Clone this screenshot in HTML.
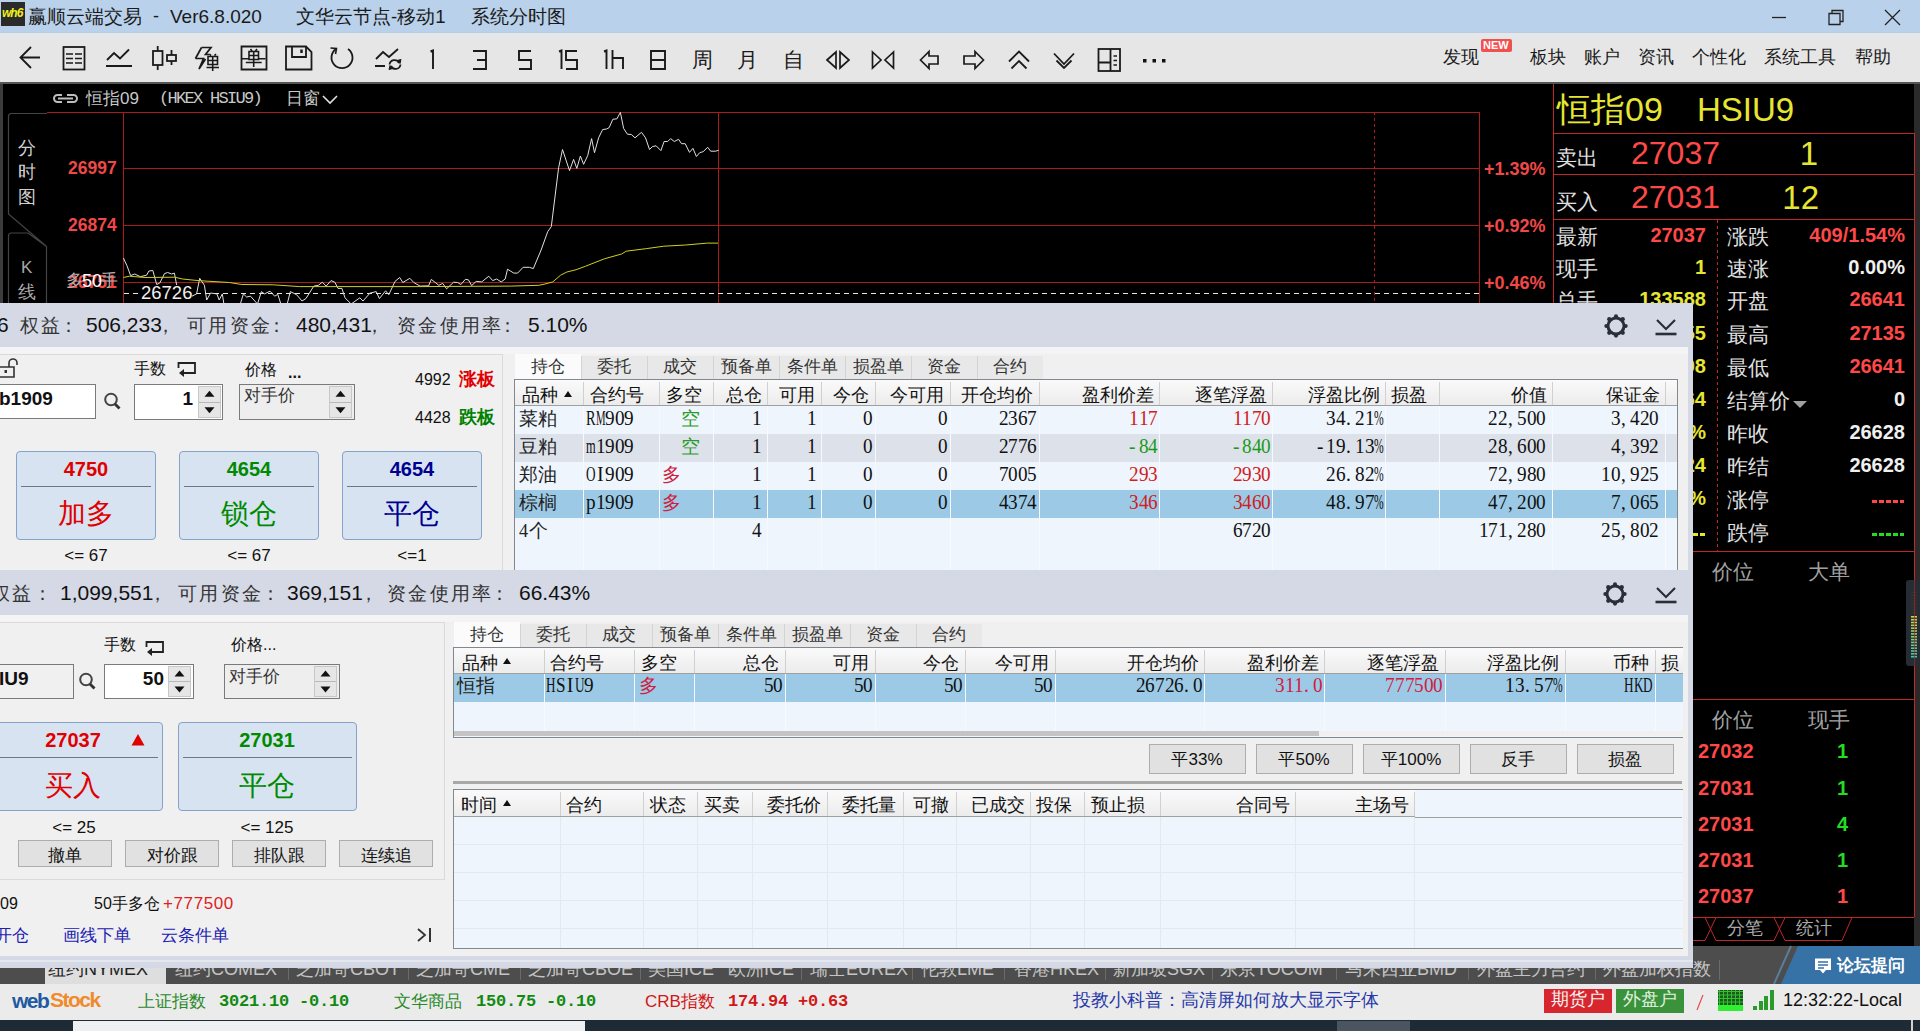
<!DOCTYPE html>
<html><head><meta charset="utf-8">
<style>
*{margin:0;padding:0;box-sizing:border-box}
html,body{width:1920px;height:1031px;overflow:hidden;background:#f0f0f0;font-family:"Liberation Sans",sans-serif;color:#000}
.a{position:absolute}
.t{position:absolute;white-space:nowrap;line-height:1}
svg{position:absolute;overflow:visible}
.sr{font-family:"Liberation Serif",serif}
.mo{font-family:"Liberation Mono",monospace}
.b{font-weight:bold}
.r{text-align:right}
.c{text-align:center}
/* quote panel */
.ql{color:#e0e0e0;font-size:19px}
.qv{font-weight:bold;font-size:20px;text-align:right}
.red{color:#ff4848}
.yel{color:#e6e632}
.wht{color:#f0f0f0}
.grn{color:#22dd22}
/* tables */
.tab{position:absolute;height:24px;background:#e8e8e8;border-right:1px solid #d0d0d0;font-size:17px;color:#333;text-align:center;line-height:24px}
.tab.on{background:#fcfcfc}
.th{position:absolute;font-size:17px;color:#111;line-height:1;white-space:nowrap}
.td{position:absolute;font-size:18px;line-height:1;white-space:nowrap;font-family:"Liberation Serif",serif;color:#111}
.btn{position:absolute;background:#e1e1e1;border:1px solid #adadad;font-size:16px;color:#111;text-align:center}
.bb{position:absolute;background:#d7e3f1;border:1px solid #85a2c8;border-radius:4px}

</style></head><body>
<!-- title bar -->
<div class="a" style="left:0;top:0;width:1920px;height:33px;background:#b9d1ea"></div>
<div class="a" style="left:1px;top:2px;width:24px;height:24px;background:#2a2a2a"></div>
<div class="t b" style="left:2px;top:7px;font-size:12px;color:#f0f020;letter-spacing:-1px;font-style:italic">wh6</div>
<div class="t" style="left:28px;top:8px;font-size:18.5px;color:#1a1a1a">赢顺云端交易</div>
<div class="t" style="left:153px;top:7px;font-size:18px;color:#1a1a1a">-</div>
<div class="t" style="left:170px;top:7px;font-size:19px;color:#1a1a1a">Ver6.8.020</div>
<div class="t" style="left:296px;top:8px;font-size:18.5px;color:#1a1a1a">文华云节点-移动1</div>
<div class="t" style="left:471px;top:8px;font-size:18.5px;color:#1a1a1a">系统分时图</div>
<svg style="left:0;top:0" width="1920" height="33" fill="none" stroke="#222" stroke-width="1.3">
<path d="M1772 17.5H1786"/>
<path d="M1829 13.5h11v11h-11z M1832 13.5v-3h11v11h-3"/>
<path d="M1885 10L1900 25M1900 10L1885 25"/>
</svg>
<!-- toolbar -->
<div class="a" style="left:0;top:33px;width:1920px;height:49px;background:#e6e6e6"></div>
<div class="a" style="left:0;top:32px;width:1920px;height:1px;background:#bfcbd8"></div><div class="a" style="left:0;top:33px;width:1920px;height:6px;background:linear-gradient(#e3e8ee,#e6e6e6)"></div>
<div class="a" style="left:0;top:82px;width:1920px;height:2px;background:#555"></div>
<svg style="left:0;top:0" width="1920" height="84" fill="none" stroke="#1a1a1a" stroke-width="1.8">
<!-- back -->
<path d="M40 57.5H21M31 47L20.5 57.5L31 68"/>
<!-- list -->
<rect x="63.5" y="47" width="21" height="22.5"/>
<path d="M66 54h7M75 54h7M66 58.5h7M75 58.5h7M66 63h7M75 63h7" stroke-width="1.5"/>
<!-- line chart -->
<path d="M107 60L114 53L120 58.5L129 49.5M106 66H132"/>
<!-- candles -->
<rect x="153" y="51" width="9.5" height="14"/>
<path d="M157.7 46V51M157.7 65V70"/>
<rect x="167" y="55" width="9" height="6"/>
<path d="M171.5 50V55M171.5 61V65"/>
<!-- lightning + dan -->
<path d="M201.5 47.5H211L205.5 54.5H209.5M195.5 58.5H203.5L199 69L205.5 59" stroke-width="1.7" stroke-linejoin="miter"/><path d="M201.5 47.5L195.5 58.5" stroke-width="1.7"/><path d="M208 56.5H217.5V64.5H208ZM208 60.5H217.5M212.7 56.5V71M206.5 67.5H219M209.5 54L211 55.5M216 54L214.5 55.5" stroke-width="1.6"/>
<!-- dan box -->
<path d="M241.5 46.5H266.5V69.5H241.5Z"/>
<path d="M249 51.5H258.5V59.5H249ZM249 55.5H258.5M253.7 51.5V67M245.8 62.5H261.7M242 58.7H249M258.5 58.7H265.5M250.5 49L252 51M257 49L255.5 51" stroke-width="1.6"/>
<!-- save -->
<path d="M286 46.5H306L311.5 52V69.5H286Z"/>
<path d="M292 46.5V57H306V46.5"/>
<path d="M301.5 49.5V53" stroke-width="2.5"/>
<!-- refresh -->
<path d="M336 49A10.5 10.5 0 1 0 348 49"/>
<path d="M330.5 48L336.5 48.5L335.5 54" stroke-width="1.6"/>
<!-- line sync -->
<path d="M376 59L383 52L389 57L398 49M375 66H385"/>
<path d="M389.5 64.5a5 5 0 0 1 9.5-1.5M400.5 64.5a5 5 0 0 1 -9.5 1.5" stroke-width="1.8"/><path d="M397 60.5L400 63.5L401 59.5ZM393 68.5L390 65.5L389 69.5Z" fill="#1a1a1a" stroke-width="1"/>
<!-- 1 3 5 15 1h -->
<path d="M430.5 51.5L433 50.5V69M473 51H486V69H473M477 60H486M531 51H519V60H531V69H519M559 51.5L561.5 50.5V69M577 51H566V60H577V69H566M604 51.5L606.5 50.5V69M612.5 50V69M612.5 58H623V69" stroke-width="1.9"/>
<!-- 日 -->
<path d="M651 51H665V69H651ZM651 60H665" stroke-width="1.9"/>
<!-- triangles -->
<path d="M827 60L836 52V68ZM840 52L849 60L840 68Z" stroke-width="1.7"/>
<path d="M872.5 52L881 60L872.5 68ZM893.5 52L885 60L893.5 68Z" stroke-width="1.7"/>
<!-- block arrows -->
<path d="M920.5 60L929 51.5V56H938V64H929V68.5Z" stroke-width="1.7"/>
<path d="M983.5 60L975 51.5V56H964V64H975V68.5Z" stroke-width="1.7"/>
<!-- chevrons -->
<path d="M1009 61.5L1019 51.5L1029 61.5M1011.5 68.5L1019 61L1026.5 68.5"/>
<path d="M1054 51.5L1064 62L1074 51.5M1056.5 58.5L1064 66L1071.5 58.5" transform="translate(0,2)"/>
<!-- layout -->
<rect x="1098.5" y="49" width="21.5" height="22"/>
<path d="M1110.5 49V71M1098.5 62.5H1110.5"/>
<path d="M1113.5 56H1117M1113.5 60.5H1117M1113.5 65H1117" stroke-width="1.7"/>
</svg>
<svg style="left:0;top:0" width="1920" height="84">
<rect x="1143" y="59" width="3.5" height="3.5" fill="#111"/>
<rect x="1152.5" y="59" width="3.5" height="3.5" fill="#111"/>
<rect x="1162" y="59" width="3.5" height="3.5" fill="#111"/>
</svg>
<div class="t" style="left:692px;top:49px;font-size:21px;color:#1a1a1a">周</div>
<div class="t" style="left:737px;top:49px;font-size:21px;color:#1a1a1a">月</div>
<div class="t" style="left:783px;top:49px;font-size:21px;color:#1a1a1a">自</div>
<!-- right menu -->
<div class="t" style="left:1443px;top:48px;font-size:18px;color:#1a1a1a">发现</div>
<div class="a" style="left:1481px;top:39px;width:31px;height:13px;background:#f05050;border-radius:2px"></div>
<div class="t b" style="left:1483px;top:40px;font-size:11px;color:#fff">NEW</div>
<div class="t" style="left:1530px;top:48px;font-size:18px;color:#1a1a1a">板块</div>
<div class="t" style="left:1584px;top:48px;font-size:18px;color:#1a1a1a">账户</div>
<div class="t" style="left:1638px;top:48px;font-size:18px;color:#1a1a1a">资讯</div>
<div class="t" style="left:1692px;top:48px;font-size:18px;color:#1a1a1a">个性化</div>
<div class="t" style="left:1764px;top:48px;font-size:18px;color:#1a1a1a">系统工具</div>
<div class="t" style="left:1855px;top:48px;font-size:18px;color:#1a1a1a">帮助</div>
<!-- chart -->
<div class="a" style="left:0;top:84px;width:1553px;height:219px;background:#000"></div>
<div class="a" style="left:0;top:84px;width:3px;height:219px;background:#3c3c3c"></div>
<svg style="left:0;top:0" width="1553" height="303">
<defs><clipPath id="cc"><rect x="0" y="84" width="1553" height="219"/></clipPath></defs>
<g clip-path="url(#cc)">
<path d="M8.5 303V236Q8.5 233 11.5 233H28L46.5 246.5V303M47 113.5H11.5Q8.5 113.5 8.5 116.5V214L46 246" fill="none" stroke="#444" stroke-width="1.2"/>
<path d="M47 112.5 H1479" stroke="#a81c1c" stroke-width="1"/>
<path d="M123 168.5 H1479" stroke="#a81c1c" stroke-width="1"/>
<path d="M123 225.5 H1479" stroke="#a81c1c" stroke-width="1"/>
<path d="M123 282.5 H1479" stroke="#a81c1c" stroke-width="1"/>
<path d="M123.5 112V303 M718.5 112V303 M1479.5 112V303" stroke="#a81c1c" stroke-width="1"/>
<path d="M1374.5 112V303" stroke="#a81c1c" stroke-width="1" stroke-dasharray="3,3"/>
<path d="M1553.5 84V303" stroke="#a81c1c" stroke-width="1"/>
<path d="M124 293.5H1479" stroke="#e8e8e8" stroke-width="1.2" stroke-dasharray="5,4"/>
<polyline points="123.4,258.0 127.0,265.8 130.6,275.6 134.8,274.0 140.3,276.7 146.6,275.2 148.9,271.0 152.8,270.5 156.7,284.5 159.8,283.0 164.5,273.6 167.7,272.5 171.6,274.0 174.4,273.1 177.0,286.9 184.0,295.0 190.3,297.0 196.6,293.9 199.7,278.3 204.4,285.3 206.7,300.0 210.6,293.0 216.9,293.9 219.2,300.0 222.3,293.9 223.9,304.0 240.3,304.0 243.4,293.9 246.6,297.0 250.5,296.2 257.5,304.0 261.4,291.6 264.5,293.9 270.0,291.2 274.7,296.2 277.8,294.4 280.9,304.0 287.2,304.0 290.3,291.6 296.6,294.7 302.0,301.0 305.9,298.6 313.8,286.1 318.4,285.3 322.3,282.2 326.2,286.1 331.0,280.6 334.8,282.2 338.0,288.4 341.9,288.4 345.0,297.8 351.2,304.0 359.8,297.8 363.0,301.0 370.0,293.1 376.2,291.6 379.4,298.6 385.6,290.8 388.8,294.7 395.0,281.4 399.7,277.5 402.8,282.5 409.8,278.3 413.8,282.5 420.0,286.1 428.6,285.8 431.3,279.4 438.8,285.3 442.7,283.4 446.6,288.8 453.6,282.2 457.5,282.5 460.9,284.5 465.3,279.4 468.4,279.8 471.6,285.6 476.2,281.4 481.7,281.9 488.8,276.2 492.7,280.6 496.6,279.0 501.2,281.9 505.2,279.0 507.5,269.2 513.8,273.1 517.6,273.1 523.1,267.3 529.4,267.3 533.3,268.6 541.1,250.0 547.7,231.7 551.3,226.6 558.6,167.7 562.5,149.5 569.5,170.6 573.6,159.4 576.8,168.4 580.4,156.0 583.6,164.3 587.7,155.6 591.6,138.6 594.5,152.7 598.6,137.8 602.7,129.5 606.2,129.1 609.1,127.7 612.9,119.2 616.8,118.9 620.4,112.4 623.6,128.4 627.4,134.2 631.3,134.5 635.0,137.8 641.5,132.3 645.5,137.8 649.5,149.5 652.4,146.6 656.1,145.8 660.9,150.6 664.1,141.5 667.7,141.5 670.6,138.6 674.3,141.5 678.6,139.3 681.5,143.7 685.2,143.7 689.5,152.4 692.9,148.3 696.4,156.5 699.7,152.7 703.1,151.7 707.7,147.3 710.7,151.2 715.7,151.2 718.7,150.2" fill="none" stroke="#e0e0e0" stroke-width="1"/>
<polyline points="123.4,277.5 129.4,276.2 145.0,277.5 174.7,277.2 182.5,279.0 198.0,280.6 229.4,282.5 241.9,284.5 273.1,284.8 299.7,286.6 420.0,286.6 510.6,286.1 538.8,285.3 545.0,284.0 552.8,281.9 560.6,275.2 566.9,272.0 576.2,269.7 585.6,266.2 604.4,258.8 621.6,254.0 626.2,251.2 646.6,248.6 663.8,246.2 685.6,245.0 707.5,243.1 718.0,243.1" fill="none" stroke="#d0d020" stroke-width="1"/>
<path d="M62 95H57.5a3.5 3.5 0 0 0 0 7H62M67 95H73.5a3.5 3.5 0 0 1 0 7H67M58 98.5H73" fill="none" stroke="#bdbdbd" stroke-width="2"/>
<path d="M323 96L330 103L337 96" fill="none" stroke="#e0e0e0" stroke-width="1.6"/>
</g></svg>
<div class="t" style="left:86px;top:90px;font-size:17px;color:#c8c8c8">恒指09</div>
<div class="t mo" style="left:159px;top:90px;font-size:17px;color:#c8c8c8;letter-spacing:-1.7px">(HKEX HSIU9)</div>
<div class="t" style="left:286px;top:90px;font-size:17px;color:#c8c8c8">日窗</div>
<div class="t" style="left:18px;top:139px;font-size:18px;color:#d0d0d0">分</div>
<div class="t" style="left:18px;top:163px;font-size:18px;color:#d0d0d0">时</div>
<div class="t" style="left:18px;top:188px;font-size:18px;color:#d0d0d0">图</div>
<div class="t" style="left:21px;top:259px;font-size:17px;color:#a8a8a8">K</div>
<div class="t" style="left:18px;top:283px;font-size:18px;color:#a8a8a8">线</div>
<div class="t b" style="left:68px;top:160px;font-size:17.5px;color:#f04848">26997</div>
<div class="t b" style="left:68px;top:217px;font-size:17.5px;color:#f04848">26874</div>
<div class="t b" style="left:68px;top:274px;font-size:17.5px;color:#f04848">26751</div>
<div class="t b" style="left:1484px;top:160px;font-size:18px;color:#f04848">+1.39%</div>
<div class="t b" style="left:1484px;top:217px;font-size:18px;color:#f04848">+0.92%</div>
<div class="t b" style="left:1484px;top:274px;font-size:18px;color:#f04848">+0.46%</div>
<div class="t" style="left:66px;top:272px;font-size:17px;color:#b0b0b0">多</div>
<div class="t" style="left:101px;top:272px;font-size:17px;color:#b0b0b0">手</div>
<div class="t" style="left:82px;top:272px;font-size:18px;color:#fff">50</div>
<div class="a" style="left:140px;top:285px;width:52px;height:18px;background:#000"></div>
<div class="t" style="left:141px;top:284px;font-size:18.5px;color:#f0f0f0">26726</div>
<!-- quote panel -->
<div class="a" style="left:1553px;top:84px;width:367px;height:862px;background:#000"></div>
<div class="a" style="left:1914px;top:84px;width:6px;height:862px;background:#2a2a2a"></div>
<svg style="left:0;top:0" width="1920" height="1031">
<path d="M1553.5 84V946" stroke="#c02828" stroke-width="1"/>
<path d="M1553 133.5H1914" stroke="#c02828" stroke-width="1"/>
<path d="M1553 174.5H1914" stroke="#c02828" stroke-width="1"/>
<path d="M1553 219.5H1914" stroke="#c02828" stroke-width="1"/>
<path d="M1553 551.5H1914" stroke="#c02828" stroke-width="1"/>
<path d="M1553 699.5H1914" stroke="#c02828" stroke-width="1"/>
<path d="M1553 917.5H1914" stroke="#c02828" stroke-width="1"/>
<path d="M1914.5 133V917" stroke="#c02828" stroke-width="1"/>
<path d="M1717.5 220V551" stroke="#c02828" stroke-width="1" stroke-dasharray="3,3"/>
<path d="M1553 940.5H1705L1716 917.5M1705 917.5L1716 940.5H1774L1785 917.5M1774 917.5L1785 940.5H1842L1852 917.5" fill="none" stroke="#c02828" stroke-width="1"/>
<path d="M1793 401H1807L1800 408Z" fill="#a0a0a0"/>
<rect x="1906" y="580" width="14" height="86" rx="3" fill="#262c34"/>
<rect x="1911" y="616.0" width="6" height="1.6" fill="#d8d040"/>
<rect x="1911" y="618.9" width="6" height="1.6" fill="#cdcf47"/>
<rect x="1911" y="621.7" width="6" height="1.6" fill="#c2ce4e"/>
<rect x="1911" y="624.5" width="6" height="1.6" fill="#b7ce56"/>
<rect x="1911" y="627.4" width="6" height="1.6" fill="#accd5d"/>
<rect x="1911" y="630.2" width="6" height="1.6" fill="#a1cd65"/>
<rect x="1911" y="633.1" width="6" height="1.6" fill="#96cc6c"/>
<rect x="1911" y="636.0" width="6" height="1.6" fill="#8ccc74"/>
<rect x="1911" y="638.8" width="6" height="1.6" fill="#81cb7b"/>
<rect x="1911" y="641.6" width="6" height="1.6" fill="#76ca82"/>
<rect x="1911" y="644.5" width="6" height="1.6" fill="#6bca8a"/>
<rect x="1911" y="647.4" width="6" height="1.6" fill="#60c991"/>
<rect x="1911" y="650.2" width="6" height="1.6" fill="#55c999"/>
<rect x="1911" y="653.0" width="6" height="1.6" fill="#4ac8a0"/>
<rect x="1911" y="655.9" width="6" height="1.6" fill="#40c8a8"/>
<rect x="1911" y="592.0" width="6" height="1.2" fill="#3a3030"/>
<rect x="1911" y="594.9" width="6" height="1.2" fill="#3a3030"/>
<rect x="1911" y="597.7" width="6" height="1.2" fill="#3a3030"/>
<rect x="1911" y="600.5" width="6" height="1.2" fill="#3a3030"/>
<rect x="1911" y="603.4" width="6" height="1.2" fill="#3a3030"/>
<rect x="1911" y="606.2" width="6" height="1.2" fill="#3a3030"/>
<rect x="1911" y="609.1" width="6" height="1.2" fill="#3a3030"/>
<rect x="1911" y="612.0" width="6" height="1.2" fill="#3a3030"/>
<path d="M1914.5 580V666" stroke="#a02828" stroke-width="1" opacity="0.7"/>
</svg>
<div class="t" style="left:1557px;top:92px;font-size:34px;color:#e6e632;">恒指09</div>
<div class="t" style="left:1697px;top:93px;font-size:33px;color:#e6e632;">HSIU9</div>
<div class="t" style="left:1556px;top:147px;font-size:21px;color:#e0e0e0;">卖出</div>
<div class="t" style="left:1631px;top:137px;font-size:32px;color:#ff4848;">27037</div>
<div class="t" style="right:102px;top:137px;font-size:33px;color:#e6e632;">1</div>
<div class="t" style="left:1556px;top:191px;font-size:21px;color:#e0e0e0;">买入</div>
<div class="t" style="left:1631px;top:181px;font-size:32px;color:#ff4848;">27031</div>
<div class="t" style="right:101px;top:181px;font-size:33px;color:#e6e632;">12</div>
<div class="t" style="left:1556px;top:226px;font-size:21px;color:#e0e0e0;">最新</div>
<div class="t b" style="right:214px;top:225px;font-size:20px;color:#ff4848;">27037</div>
<div class="t" style="left:1727px;top:226px;font-size:21px;color:#e0e0e0;">涨跌</div>
<div class="t b" style="right:15px;top:225px;font-size:20px;color:#ff4848;">409/1.54%</div>
<div class="t" style="left:1556px;top:258px;font-size:21px;color:#e0e0e0;">现手</div>
<div class="t b" style="right:214px;top:257px;font-size:20px;color:#e6e632;">1</div>
<div class="t" style="left:1727px;top:258px;font-size:21px;color:#e0e0e0;">速涨</div>
<div class="t b" style="right:15px;top:257px;font-size:20px;color:#f0f0f0;">0.00%</div>
<div class="t" style="left:1556px;top:290px;font-size:21px;color:#e0e0e0;">总手</div>
<div class="t b" style="right:214px;top:289px;font-size:20px;color:#e6e632;">133588</div>
<div class="t" style="left:1727px;top:290px;font-size:21px;color:#e0e0e0;">开盘</div>
<div class="t b" style="right:15px;top:289px;font-size:20px;color:#ff4848;">26641</div>
<div class="t" style="left:1727px;top:324px;font-size:21px;color:#e0e0e0;">最高</div>
<div class="t b" style="right:15px;top:323px;font-size:20px;color:#ff4848;">27135</div>
<div class="t" style="left:1727px;top:357px;font-size:21px;color:#e0e0e0;">最低</div>
<div class="t b" style="right:15px;top:356px;font-size:20px;color:#ff4848;">26641</div>
<div class="t" style="left:1727px;top:390px;font-size:21px;color:#e0e0e0;">结算价</div>
<div class="t b" style="right:15px;top:389px;font-size:20px;color:#f0f0f0;">0</div>
<div class="t" style="left:1727px;top:423px;font-size:21px;color:#e0e0e0;">昨收</div>
<div class="t b" style="right:15px;top:422px;font-size:20px;color:#f0f0f0;">26628</div>
<div class="t" style="left:1727px;top:456px;font-size:21px;color:#e0e0e0;">昨结</div>
<div class="t b" style="right:15px;top:455px;font-size:20px;color:#f0f0f0;">26628</div>
<div class="t" style="left:1727px;top:489px;font-size:21px;color:#e0e0e0;">涨停</div>
<div class="t" style="left:1727px;top:522px;font-size:21px;color:#e0e0e0;">跌停</div>
<div class="t b" style="right:214px;top:323px;font-size:20px;color:#e6e632;">55</div>
<div class="t b" style="right:214px;top:356px;font-size:20px;color:#e6e632;">98</div>
<div class="t b" style="right:214px;top:389px;font-size:20px;color:#e6e632;">64</div>
<div class="t b" style="right:214px;top:422px;font-size:20px;color:#e6e632;">%</div>
<div class="t b" style="right:214px;top:455px;font-size:20px;color:#e6e632;">24</div>
<div class="t b" style="right:214px;top:488px;font-size:20px;color:#e6e632;">%</div>
<div class="a" style="left:1872px;top:500px;width:32px;height:3px;background:repeating-linear-gradient(90deg,#ff4848 0 5px,transparent 5px 7px)"></div>
<div class="a" style="left:1872px;top:533px;width:32px;height:3px;background:repeating-linear-gradient(90deg,#22dd22 0 5px,transparent 5px 7px)"></div>
<div class="a" style="left:1693px;top:533px;width:13px;height:3px;background:repeating-linear-gradient(90deg,#e6e632 0 5px,transparent 5px 7px)"></div>
<div class="t" style="left:1712px;top:561px;font-size:21px;color:#a0a0a0;">价位</div>
<div class="t" style="left:1808px;top:561px;font-size:21px;color:#a0a0a0;">大单</div>
<div class="t" style="left:1712px;top:709px;font-size:21px;color:#a0a0a0;">价位</div>
<div class="t" style="left:1808px;top:709px;font-size:21px;color:#a0a0a0;">现手</div>
<div class="t b" style="left:1698px;top:741px;font-size:20px;color:#ff4848;">27032</div>
<div class="t b" style="right:72px;top:741px;font-size:20px;color:#22dd22;">1</div>
<div class="t b" style="left:1698px;top:778px;font-size:20px;color:#ff4848;">27031</div>
<div class="t b" style="right:72px;top:778px;font-size:20px;color:#22dd22;">1</div>
<div class="t b" style="left:1698px;top:814px;font-size:20px;color:#ff4848;">27031</div>
<div class="t b" style="right:72px;top:814px;font-size:20px;color:#22dd22;">4</div>
<div class="t b" style="left:1698px;top:850px;font-size:20px;color:#ff4848;">27031</div>
<div class="t b" style="right:72px;top:850px;font-size:20px;color:#22dd22;">1</div>
<div class="t b" style="left:1698px;top:886px;font-size:20px;color:#ff4848;">27037</div>
<div class="t b" style="right:72px;top:886px;font-size:20px;color:#ff4848;">1</div>
<div class="t" style="left:1727px;top:919px;font-size:18px;color:#a8a8a8;">分笔</div>
<div class="t" style="left:1796px;top:919px;font-size:18px;color:#a8a8a8;">统计</div>
<!-- bottom tabs -->
<div class="a" style="left:0px;top:946px;width:1920px;height:38px;background:#4d4d4d;"></div>
<div class="a" style="left:45px;top:950px;width:121px;height:34px;background:#dedede;"></div>
<div class="t" style="left:48px;top:960px;font-size:18px;color:#222;">纽约NYMEX</div>
<div class="t" style="left:175px;top:960px;font-size:18px;color:#c4c4c4;">纽约COMEX</div>
<div class="t" style="left:296px;top:960px;font-size:18px;color:#c4c4c4;">芝加哥CBOT</div>
<div class="t" style="left:416px;top:960px;font-size:18px;color:#c4c4c4;">芝加哥CME</div>
<div class="t" style="left:528px;top:960px;font-size:18px;color:#c4c4c4;">芝加哥CBOE</div>
<div class="t" style="left:648px;top:960px;font-size:18px;color:#c4c4c4;">美国ICE</div>
<div class="t" style="left:728px;top:960px;font-size:18px;color:#c4c4c4;">欧洲ICE</div>
<div class="t" style="left:810px;top:960px;font-size:18px;color:#c4c4c4;">瑞士EUREX</div>
<div class="t" style="left:921px;top:960px;font-size:18px;color:#c4c4c4;">伦敦LME</div>
<div class="t" style="left:1014px;top:960px;font-size:18px;color:#c4c4c4;">香港HKEX</div>
<div class="t" style="left:1113px;top:960px;font-size:18px;color:#c4c4c4;">新加坡SGX</div>
<div class="t" style="left:1220px;top:960px;font-size:18px;color:#c4c4c4;">东京TOCOM</div>
<div class="t" style="left:1345px;top:960px;font-size:18px;color:#c4c4c4;">马来西亚BMD</div>
<div class="t" style="left:1477px;top:960px;font-size:18px;color:#c4c4c4;">外盘主力合约</div>
<div class="t" style="left:1603px;top:960px;font-size:18px;color:#c4c4c4;">外盘加权指数</div>
<div class="a" style="left:288px;top:960px;width:1px;height:20px;background:#6a6a6a;"></div>
<div class="a" style="left:408px;top:960px;width:1px;height:20px;background:#6a6a6a;"></div>
<div class="a" style="left:520px;top:960px;width:1px;height:20px;background:#6a6a6a;"></div>
<div class="a" style="left:640px;top:960px;width:1px;height:20px;background:#6a6a6a;"></div>
<div class="a" style="left:801px;top:960px;width:1px;height:20px;background:#6a6a6a;"></div>
<div class="a" style="left:912px;top:960px;width:1px;height:20px;background:#6a6a6a;"></div>
<div class="a" style="left:1004px;top:960px;width:1px;height:20px;background:#6a6a6a;"></div>
<div class="a" style="left:1105px;top:960px;width:1px;height:20px;background:#6a6a6a;"></div>
<div class="a" style="left:1212px;top:960px;width:1px;height:20px;background:#6a6a6a;"></div>
<div class="a" style="left:1336px;top:960px;width:1px;height:20px;background:#6a6a6a;"></div>
<div class="a" style="left:1468px;top:960px;width:1px;height:20px;background:#6a6a6a;"></div>
<div class="a" style="left:1595px;top:960px;width:1px;height:20px;background:#6a6a6a;"></div>
<div class="a" style="left:1719px;top:960px;width:1px;height:20px;background:#6a6a6a;"></div>
<svg style="left:0;top:0" width="1920" height="1031"><path d="M1781 984L1798 946H1920V984Z" fill="#3672a6"/><path d="M1774 984L1791 946" stroke="#5a7d9c" stroke-width="2"/></svg>
<svg style="left:0;top:0" width="1920" height="1031"><path d="M1815 958.5H1831V970H1826L1823 973.5L1820 970H1815Z" fill="#fff"/><path d="M1818 962H1828M1818 965H1828M1818 968H1824" stroke="#3672a6" stroke-width="1.3"/></svg>
<div class="t b" style="left:1837px;top:957px;font-size:17px;color:#ffffff;">论坛提问</div>
<!-- status bar -->
<div class="a" style="left:0px;top:984px;width:1920px;height:36px;background:#ebebeb;"></div>
<div class="t b" style="left:12px;top:990px;font-size:21px;color:#1f5aa0;letter-spacing:-1.5px">web</div>
<div class="t b" style="left:50px;top:989px;font-size:21px;color:#f08a2a;letter-spacing:-1.5px">Stock</div>
<div class="t" style="left:138px;top:993px;font-size:17px;color:#2a8a2a;">上证指数</div>
<div class="t b mo" style="left:219px;top:993px;font-size:17px;color:#108a10;letter-spacing:-0.2px">3021.10 -0.10</div>
<div class="t" style="left:394px;top:993px;font-size:17px;color:#2a8a2a;">文华商品</div>
<div class="t b mo" style="left:476px;top:993px;font-size:17px;color:#108a10;letter-spacing:-0.2px">150.75 -0.10</div>
<div class="t" style="left:645px;top:993px;font-size:17px;color:#d01818;">CRB指数</div>
<div class="t b mo" style="left:728px;top:993px;font-size:17px;color:#d01818;letter-spacing:-0.2px">174.94 +0.63</div>
<div class="t" style="left:1073px;top:991px;font-size:18px;color:#2838a8;">投教小科普：高清屏如何放大显示字体</div>
<div class="a" style="left:1544px;top:989px;width:68px;height:24px;background:#d8262e;"></div>
<div class="t sr" style="left:1578px;width:0;text-align:center;display:flex;justify-content:center;top:990px;font-size:18px;color:#f4f4f4;">期货户</div>
<div class="a" style="left:1616px;top:989px;width:68px;height:24px;background:#3a923a;"></div>
<div class="t sr" style="left:1650px;width:0;text-align:center;display:flex;justify-content:center;top:990px;font-size:18px;color:#e0f0e0;">外盘户</div>
<svg style="left:0;top:0" width="1920" height="1031"><path d="M1703 995L1697 1010" stroke="#e05050" stroke-width="1.2"/>
<rect x="1718" y="990" width="25" height="21" fill="#1a5a1a"/><rect x="1718" y="1005" width="25" height="6" fill="#30ee30"/>
<path d="M1719.5 990V1005" stroke="#30c030" stroke-width="1"/>
<path d="M1723.5 990V1005" stroke="#30c030" stroke-width="1"/>
<path d="M1727.5 990V1005" stroke="#30c030" stroke-width="1"/>
<path d="M1731.5 990V1005" stroke="#30c030" stroke-width="1"/>
<path d="M1735.5 990V1005" stroke="#30c030" stroke-width="1"/>
<path d="M1739.5 990V1005" stroke="#30c030" stroke-width="1"/>
<path d="M1718 991.5H1743" stroke="#30c030" stroke-width="1"/>
<path d="M1718 995.0H1743" stroke="#30c030" stroke-width="1"/>
<path d="M1718 998.5H1743" stroke="#30c030" stroke-width="1"/>
<path d="M1718 1002.0H1743" stroke="#30c030" stroke-width="1"/>
<rect x="1753" y="1006" width="4" height="4" fill="#2a9a2a"/><rect x="1759" y="1001" width="4" height="9" fill="#2a9a2a"/><rect x="1764" y="996" width="4" height="14" fill="#2a9a2a"/><rect x="1770" y="990" width="4" height="20" fill="#2a9a2a"/>
</svg>
<div class="t" style="left:1783px;top:991px;font-size:18px;color:#111;">12:32:22-Local</div>
<!-- taskbar -->
<div class="a" style="left:0px;top:1020px;width:1920px;height:11px;background:#1e2b34;"></div>
<div class="a" style="left:73px;top:1021px;width:512px;height:10px;background:#eef0f2;"></div>
<div class="a" style="left:1337px;top:1021px;width:73px;height:10px;background:#4a5560;"></div>
<div class="a" style="left:1911px;top:1020px;width:2px;height:11px;background:#d0d0d0;"></div>
<!-- panel 1 -->
<div class="a" style="left:0px;top:303px;width:1693px;height:267px;background:#d5d9e6;"></div>
<div class="a" style="left:0px;top:347px;width:1688px;height:223px;background:#f0f0f0;"></div>
<div class="a" style="left:0px;top:347px;width:1688px;height:7px;background:#f4f4f4;"></div>
<div class="a" style="left:0px;top:354px;width:503px;height:216px;background:transparent;border-top:1px solid #dadada;border-right:1px solid #dadada;"></div>
<div class="t" style="left:-3px;top:314px;font-size:21px;color:#111;">6</div>
<div class="t" style="left:20px;top:316px;font-size:19px;color:#333;letter-spacing:2.3px">权益</div>
<div class="t" style="left:59px;top:316px;font-size:19px;color:#333;">：</div>
<div class="t" style="left:86px;top:314px;font-size:21px;color:#111;">506,233</div>
<div class="t" style="left:156px;top:316px;font-size:19px;color:#333;">，</div>
<div class="t" style="left:187px;top:316px;font-size:19px;color:#333;letter-spacing:2.3px">可用资金</div>
<div class="t" style="left:267px;top:316px;font-size:19px;color:#333;">：</div>
<div class="t" style="left:296px;top:314px;font-size:21px;color:#111;">480,431</div>
<div class="t" style="left:365px;top:316px;font-size:19px;color:#333;">，</div>
<div class="t" style="left:397px;top:316px;font-size:19px;color:#333;letter-spacing:2.3px">资金使用率</div>
<div class="t" style="left:498px;top:316px;font-size:19px;color:#333;">：</div>
<div class="t" style="left:528px;top:314px;font-size:21px;color:#111;">5.10%</div>
<svg style="left:0;top:0" width="1920" height="1031"><g fill="#2a2e38"><circle cx="1625.60" cy="326.00" r="2.1"/><circle cx="1622.79" cy="332.79" r="2.1"/><circle cx="1616.00" cy="335.60" r="2.1"/><circle cx="1609.21" cy="332.79" r="2.1"/><circle cx="1606.40" cy="326.00" r="2.1"/><circle cx="1609.21" cy="319.21" r="2.1"/><circle cx="1616.00" cy="316.40" r="2.1"/><circle cx="1622.79" cy="319.21" r="2.1"/></g><circle cx="1616" cy="326" r="8" fill="none" stroke="#2a2e38" stroke-width="3"/></svg>
<svg style="left:0;top:0" width="1920" height="1031"><path d="M1657 320L1666 329L1675 320" fill="none" stroke="#2a2e38" stroke-width="2.2"/><path d="M1655.5 334H1676.5" stroke="#2a2e38" stroke-width="2.6"/></svg>
<svg style="left:0;top:0" width="1920" height="1031"><path d="M0 367H14V377H0" fill="none" stroke="#333" stroke-width="1.6"/><path d="M9 367V363A4 4 0 0 1 17 363V365" fill="none" stroke="#333" stroke-width="1.6"/><rect x="4.5" y="370" width="2.5" height="3" fill="#333"/></svg>
<div class="t" style="left:134px;top:361px;font-size:16px;color:#111;">手数</div>
<svg style="left:0;top:0" width="1920" height="1031"><path d="M178.5 368V363H195V373H182" fill="none" stroke="#222" stroke-width="1.8"/><path d="M184 369L179 373L184 377Z" fill="#222"/></svg>
<div class="t" style="left:245px;top:362px;font-size:16px;color:#111;">价格</div>
<div class="t b" style="left:288px;top:365px;font-size:16px;color:#111;">...</div>
<div class="a" style="left:0px;top:384px;width:96px;height:35px;background:#fff;border:1px solid #7a7a7a;border-left:none;"></div>
<div class="t b" style="left:-1px;top:389px;font-size:19px;color:#111;">b1909</div>
<svg style="left:0;top:0" width="1920" height="1031"><circle cx="111" cy="399.5" r="5.8" fill="none" stroke="#444" stroke-width="2"/><path d="M115 404L119.5 408.5" stroke="#333" stroke-width="2.8"/></svg>
<div class="a" style="left:134px;top:384px;width:89px;height:36px;background:#fff;border:1px solid #7a7a7a;"></div>
<div class="t b" style="right:1727px;top:389px;font-size:19px;color:#111;">1</div>
<div class="a" style="left:198px;top:386px;width:23px;height:32px;background:#e6e6e6;border:1px solid #c8c8c8;"></div><div class="a" style="left:199px;top:401.5px;width:21px;height:1px;background:#b8b8b8;"></div><svg style="left:0;top:0" width="1920" height="1031"><path d="M209.5 390.8L214.5 396.8H204.5Z" fill="#111"/><path d="M209.5 413.2L214.5 407.2H204.5Z" fill="#111"/></svg>
<div class="a" style="left:239px;top:384px;width:116px;height:36px;background:#eeeeee;border:1px solid #7a7a7a;"></div>
<div class="t" style="left:244px;top:387px;font-size:17px;color:#333;">对手价</div>
<div class="a" style="left:329px;top:386px;width:23px;height:32px;background:#e6e6e6;border:1px solid #c8c8c8;"></div><div class="a" style="left:330px;top:401.5px;width:21px;height:1px;background:#b8b8b8;"></div><svg style="left:0;top:0" width="1920" height="1031"><path d="M340.5 390.8L345.5 396.8H335.5Z" fill="#111"/><path d="M340.5 413.2L345.5 407.2H335.5Z" fill="#111"/></svg>
<div class="t" style="left:415px;top:372px;font-size:16px;color:#111;">4992</div>
<div class="t b" style="left:459px;top:370px;font-size:18px;color:#e00000;">涨板</div>
<div class="t" style="left:415px;top:410px;font-size:16px;color:#111;">4428</div>
<div class="t b" style="left:459px;top:408px;font-size:18px;color:#008000;">跌板</div>
<div class="bb" style="left:16px;top:451px;width:140px;height:89px"></div>
<div class="a" style="left:21px;top:486px;width:130px;height:1px;background:#6a7888;"></div>
<div class="t b" style="left:86px;width:0;text-align:center;display:flex;justify-content:center;top:459px;font-size:20px;color:#e00000;">4750</div>
<div class="t sr" style="left:86px;width:0;text-align:center;display:flex;justify-content:center;top:500px;font-size:28px;color:#e00000;">加多</div>
<div class="t" style="left:86px;width:0;text-align:center;display:flex;justify-content:center;top:547px;font-size:17px;color:#111;">&lt;= 67</div>
<div class="bb" style="left:179px;top:451px;width:140px;height:89px"></div>
<div class="a" style="left:184px;top:486px;width:130px;height:1px;background:#6a7888;"></div>
<div class="t b" style="left:249px;width:0;text-align:center;display:flex;justify-content:center;top:459px;font-size:20px;color:#008a00;">4654</div>
<div class="t sr" style="left:249px;width:0;text-align:center;display:flex;justify-content:center;top:500px;font-size:28px;color:#008a00;">锁仓</div>
<div class="t" style="left:249px;width:0;text-align:center;display:flex;justify-content:center;top:547px;font-size:17px;color:#111;">&lt;= 67</div>
<div class="bb" style="left:342px;top:451px;width:140px;height:89px"></div>
<div class="a" style="left:347px;top:486px;width:130px;height:1px;background:#6a7888;"></div>
<div class="t b" style="left:412px;width:0;text-align:center;display:flex;justify-content:center;top:459px;font-size:20px;color:#000090;">4654</div>
<div class="t sr" style="left:412px;width:0;text-align:center;display:flex;justify-content:center;top:500px;font-size:28px;color:#000090;">平仓</div>
<div class="t" style="left:412px;width:0;text-align:center;display:flex;justify-content:center;top:547px;font-size:17px;color:#111;">&lt;=1</div>
<div class="a" style="left:515px;top:354px;width:66px;height:25px;background:#fbfbfb;"></div>
<div class="t sr" style="left:548px;width:0;text-align:center;display:flex;justify-content:center;top:358px;font-size:17px;color:#333;">持仓</div>
<div class="a" style="left:581px;top:356px;width:66px;height:23px;background:#e8e8e8;border-left:1px solid #d4d4d4;"></div>
<div class="t sr" style="left:614px;width:0;text-align:center;display:flex;justify-content:center;top:358px;font-size:17px;color:#333;">委托</div>
<div class="a" style="left:647px;top:356px;width:66px;height:23px;background:#e8e8e8;border-left:1px solid #d4d4d4;"></div>
<div class="t sr" style="left:680px;width:0;text-align:center;display:flex;justify-content:center;top:358px;font-size:17px;color:#333;">成交</div>
<div class="a" style="left:713px;top:356px;width:66px;height:23px;background:#e8e8e8;border-left:1px solid #d4d4d4;"></div>
<div class="t sr" style="left:746px;width:0;text-align:center;display:flex;justify-content:center;top:358px;font-size:17px;color:#333;">预备单</div>
<div class="a" style="left:779px;top:356px;width:66px;height:23px;background:#e8e8e8;border-left:1px solid #d4d4d4;"></div>
<div class="t sr" style="left:812px;width:0;text-align:center;display:flex;justify-content:center;top:358px;font-size:17px;color:#333;">条件单</div>
<div class="a" style="left:845px;top:356px;width:66px;height:23px;background:#e8e8e8;border-left:1px solid #d4d4d4;"></div>
<div class="t sr" style="left:878px;width:0;text-align:center;display:flex;justify-content:center;top:358px;font-size:17px;color:#333;">损盈单</div>
<div class="a" style="left:911px;top:356px;width:66px;height:23px;background:#e8e8e8;border-left:1px solid #d4d4d4;"></div>
<div class="t sr" style="left:944px;width:0;text-align:center;display:flex;justify-content:center;top:358px;font-size:17px;color:#333;">资金</div>
<div class="a" style="left:977px;top:356px;width:66px;height:23px;background:#e8e8e8;border-left:1px solid #d4d4d4;"></div>
<div class="t sr" style="left:1010px;width:0;text-align:center;display:flex;justify-content:center;top:358px;font-size:17px;color:#333;">合约</div>
<div class="a" style="left:514px;top:379px;width:1164px;height:191px;background:#eef5fc;border:1px solid #828790;border-bottom:none;"></div>
<div class="a" style="left:515px;top:380px;width:1162px;height:26px;background:#f2f2f2;border-bottom:1px solid #a0a0a0;background:linear-gradient(#fafafa,#ececec);"></div>
<div class="a" style="left:515px;top:406px;width:1162px;height:28px;background:#eff5fc;"></div>
<div class="a" style="left:515px;top:434px;width:1162px;height:28px;background:#dde2ea;"></div>
<div class="a" style="left:515px;top:462px;width:1162px;height:28px;background:#eff5fc;"></div>
<div class="a" style="left:515px;top:490px;width:1162px;height:28px;background:#9ccae6;"></div>
<div class="a" style="left:515px;top:518px;width:1162px;height:28px;background:#eff5fc;"></div>
<div class="a" style="left:515px;top:546px;width:1162px;height:28px;background:#eff5fc;"></div>
<div class="a" style="left:583px;top:382px;width:1px;height:23px;background:#d0d0d0;"></div>
<div class="a" style="left:583px;top:406px;width:1px;height:164px;background:#f6f9fd;"></div>
<div class="a" style="left:659px;top:382px;width:1px;height:23px;background:#d0d0d0;"></div>
<div class="a" style="left:659px;top:406px;width:1px;height:164px;background:#f6f9fd;"></div>
<div class="a" style="left:713px;top:382px;width:1px;height:23px;background:#d0d0d0;"></div>
<div class="a" style="left:713px;top:406px;width:1px;height:164px;background:#f6f9fd;"></div>
<div class="a" style="left:767px;top:382px;width:1px;height:23px;background:#d0d0d0;"></div>
<div class="a" style="left:767px;top:406px;width:1px;height:164px;background:#f6f9fd;"></div>
<div class="a" style="left:821px;top:382px;width:1px;height:23px;background:#d0d0d0;"></div>
<div class="a" style="left:821px;top:406px;width:1px;height:164px;background:#f6f9fd;"></div>
<div class="a" style="left:875px;top:382px;width:1px;height:23px;background:#d0d0d0;"></div>
<div class="a" style="left:875px;top:406px;width:1px;height:164px;background:#f6f9fd;"></div>
<div class="a" style="left:950px;top:382px;width:1px;height:23px;background:#d0d0d0;"></div>
<div class="a" style="left:950px;top:406px;width:1px;height:164px;background:#f6f9fd;"></div>
<div class="a" style="left:1039px;top:382px;width:1px;height:23px;background:#d0d0d0;"></div>
<div class="a" style="left:1039px;top:406px;width:1px;height:164px;background:#f6f9fd;"></div>
<div class="a" style="left:1159px;top:382px;width:1px;height:23px;background:#d0d0d0;"></div>
<div class="a" style="left:1159px;top:406px;width:1px;height:164px;background:#f6f9fd;"></div>
<div class="a" style="left:1272px;top:382px;width:1px;height:23px;background:#d0d0d0;"></div>
<div class="a" style="left:1272px;top:406px;width:1px;height:164px;background:#f6f9fd;"></div>
<div class="a" style="left:1385px;top:382px;width:1px;height:23px;background:#d0d0d0;"></div>
<div class="a" style="left:1385px;top:406px;width:1px;height:164px;background:#f6f9fd;"></div>
<div class="a" style="left:1439px;top:382px;width:1px;height:23px;background:#d0d0d0;"></div>
<div class="a" style="left:1439px;top:406px;width:1px;height:164px;background:#f6f9fd;"></div>
<div class="a" style="left:1552px;top:382px;width:1px;height:23px;background:#d0d0d0;"></div>
<div class="a" style="left:1552px;top:406px;width:1px;height:164px;background:#f6f9fd;"></div>
<div class="a" style="left:1665px;top:382px;width:1px;height:23px;background:#d0d0d0;"></div>
<div class="a" style="left:1665px;top:406px;width:1px;height:164px;background:#f6f9fd;"></div>
<div class="t" style="left:522px;top:386px;font-size:18px;color:#111;">品种</div>
<div class="t" style="left:590px;top:386px;font-size:18px;color:#111;">合约号</div>
<div class="t" style="left:666px;top:386px;font-size:18px;color:#111;">多空</div>
<div class="t" style="right:1158px;top:386px;font-size:18px;color:#111;">总仓</div>
<div class="t" style="right:1105px;top:386px;font-size:18px;color:#111;">可用</div>
<div class="t" style="right:1051px;top:386px;font-size:18px;color:#111;">今仓</div>
<div class="t" style="right:976px;top:386px;font-size:18px;color:#111;">今可用</div>
<div class="t" style="right:887px;top:386px;font-size:18px;color:#111;">开仓均价</div>
<div class="t" style="right:766px;top:386px;font-size:18px;color:#111;">盈利价差</div>
<div class="t" style="right:653px;top:386px;font-size:18px;color:#111;">逐笔浮盈</div>
<div class="t" style="right:540px;top:386px;font-size:18px;color:#111;">浮盈比例</div>
<div class="t" style="left:1391px;top:386px;font-size:18px;color:#111;">损盈</div>
<div class="t" style="right:373px;top:386px;font-size:18px;color:#111;">价值</div>
<div class="t" style="right:260px;top:386px;font-size:18px;color:#111;">保证金</div>
<svg style="left:0;top:0" width="1920" height="1031"><path d="M568 391L572 397H564Z" fill="#111"/></svg>
<div class="t sr" style="left:519px;top:409px;font-size:19px;color:#222;">菜粕</div>
<div class="t sr" style="left:586px;top:408px;font-size:20px;color:#111;"><span style="display:inline-block;width:9.6px;text-align:center;white-space:nowrap;transform:scaleX(0.72);transform-origin:0 50%;text-align:left;">R</span><span style="display:inline-block;width:9.6px;text-align:center;white-space:nowrap;transform:scaleX(0.54);transform-origin:0 50%;text-align:left;">M</span><span style="display:inline-block;width:9.6px;text-align:center;white-space:nowrap;transform:scaleX(0.96);transform-origin:0 50%;text-align:left;">9</span><span style="display:inline-block;width:9.6px;text-align:center;white-space:nowrap;transform:scaleX(0.96);transform-origin:0 50%;text-align:left;">0</span><span style="display:inline-block;width:9.6px;text-align:center;white-space:nowrap;transform:scaleX(0.96);transform-origin:0 50%;text-align:left;">9</span></div>
<div class="t sr" style="left:690px;width:0;text-align:center;display:flex;justify-content:center;top:409px;font-size:19px;color:#2a9a2a;">空</div>
<div class="t sr" style="right:1158px;top:408px;font-size:20px;color:#111;"><span style="display:inline-block;width:9.6px;text-align:center;white-space:nowrap;transform:scaleX(0.96);transform-origin:0 50%;text-align:left;">1</span></div>
<div class="t sr" style="right:1103px;top:408px;font-size:20px;color:#111;"><span style="display:inline-block;width:9.6px;text-align:center;white-space:nowrap;transform:scaleX(0.96);transform-origin:0 50%;text-align:left;">1</span></div>
<div class="t sr" style="right:1047px;top:408px;font-size:20px;color:#111;"><span style="display:inline-block;width:9.6px;text-align:center;white-space:nowrap;transform:scaleX(0.96);transform-origin:0 50%;text-align:left;">0</span></div>
<div class="t sr" style="right:972px;top:408px;font-size:20px;color:#111;"><span style="display:inline-block;width:9.6px;text-align:center;white-space:nowrap;transform:scaleX(0.96);transform-origin:0 50%;text-align:left;">0</span></div>
<div class="t sr" style="right:883px;top:408px;font-size:20px;color:#111;"><span style="display:inline-block;width:9.6px;text-align:center;white-space:nowrap;transform:scaleX(0.96);transform-origin:0 50%;text-align:left;">2</span><span style="display:inline-block;width:9.6px;text-align:center;white-space:nowrap;transform:scaleX(0.96);transform-origin:0 50%;text-align:left;">3</span><span style="display:inline-block;width:9.6px;text-align:center;white-space:nowrap;transform:scaleX(0.96);transform-origin:0 50%;text-align:left;">6</span><span style="display:inline-block;width:9.6px;text-align:center;white-space:nowrap;transform:scaleX(0.96);transform-origin:0 50%;text-align:left;">7</span></div>
<div class="t sr" style="right:762px;top:408px;font-size:20px;color:#d02020;"><span style="display:inline-block;width:9.6px;text-align:center;white-space:nowrap;transform:scaleX(0.96);transform-origin:0 50%;text-align:left;">1</span><span style="display:inline-block;width:9.6px;text-align:center;white-space:nowrap;transform:scaleX(0.96);transform-origin:0 50%;text-align:left;">1</span><span style="display:inline-block;width:9.6px;text-align:center;white-space:nowrap;transform:scaleX(0.96);transform-origin:0 50%;text-align:left;">7</span></div>
<div class="t sr" style="right:649px;top:408px;font-size:20px;color:#d02020;"><span style="display:inline-block;width:9.6px;text-align:center;white-space:nowrap;transform:scaleX(0.96);transform-origin:0 50%;text-align:left;">1</span><span style="display:inline-block;width:9.6px;text-align:center;white-space:nowrap;transform:scaleX(0.96);transform-origin:0 50%;text-align:left;">1</span><span style="display:inline-block;width:9.6px;text-align:center;white-space:nowrap;transform:scaleX(0.96);transform-origin:0 50%;text-align:left;">7</span><span style="display:inline-block;width:9.6px;text-align:center;white-space:nowrap;transform:scaleX(0.96);transform-origin:0 50%;text-align:left;">0</span></div>
<div class="t sr" style="right:536px;top:408px;font-size:20px;color:#111;"><span style="display:inline-block;width:9.6px;text-align:center;white-space:nowrap;transform:scaleX(0.96);transform-origin:0 50%;text-align:left;">3</span><span style="display:inline-block;width:9.6px;text-align:center;white-space:nowrap;transform:scaleX(0.96);transform-origin:0 50%;text-align:left;">4</span><span style="display:inline-block;width:9.6px;text-align:center;white-space:nowrap;transform:scaleX(0.96);transform-origin:0 50%;text-align:left;">.</span><span style="display:inline-block;width:9.6px;text-align:center;white-space:nowrap;transform:scaleX(0.96);transform-origin:0 50%;text-align:left;">2</span><span style="display:inline-block;width:9.6px;text-align:center;white-space:nowrap;transform:scaleX(0.96);transform-origin:0 50%;text-align:left;">1</span><span style="display:inline-block;width:9.6px;text-align:center;white-space:nowrap;transform:scaleX(0.58);transform-origin:0 50%;text-align:left;">%</span></div>
<div class="t sr" style="right:374px;top:408px;font-size:20px;color:#111;"><span style="display:inline-block;width:9.6px;text-align:center;white-space:nowrap;transform:scaleX(0.96);transform-origin:0 50%;text-align:left;">2</span><span style="display:inline-block;width:9.6px;text-align:center;white-space:nowrap;transform:scaleX(0.96);transform-origin:0 50%;text-align:left;">2</span><span style="display:inline-block;width:9.6px;text-align:center;white-space:nowrap;transform:scaleX(0.96);transform-origin:0 50%;text-align:left;">,</span><span style="display:inline-block;width:9.6px;text-align:center;white-space:nowrap;transform:scaleX(0.96);transform-origin:0 50%;text-align:left;">5</span><span style="display:inline-block;width:9.6px;text-align:center;white-space:nowrap;transform:scaleX(0.96);transform-origin:0 50%;text-align:left;">0</span><span style="display:inline-block;width:9.6px;text-align:center;white-space:nowrap;transform:scaleX(0.96);transform-origin:0 50%;text-align:left;">0</span></div>
<div class="t sr" style="right:261px;top:408px;font-size:20px;color:#111;"><span style="display:inline-block;width:9.6px;text-align:center;white-space:nowrap;transform:scaleX(0.96);transform-origin:0 50%;text-align:left;">3</span><span style="display:inline-block;width:9.6px;text-align:center;white-space:nowrap;transform:scaleX(0.96);transform-origin:0 50%;text-align:left;">,</span><span style="display:inline-block;width:9.6px;text-align:center;white-space:nowrap;transform:scaleX(0.96);transform-origin:0 50%;text-align:left;">4</span><span style="display:inline-block;width:9.6px;text-align:center;white-space:nowrap;transform:scaleX(0.96);transform-origin:0 50%;text-align:left;">2</span><span style="display:inline-block;width:9.6px;text-align:center;white-space:nowrap;transform:scaleX(0.96);transform-origin:0 50%;text-align:left;">0</span></div>
<div class="t sr" style="left:519px;top:437px;font-size:19px;color:#222;">豆粕</div>
<div class="t sr" style="left:586px;top:436px;font-size:20px;color:#111;"><span style="display:inline-block;width:9.6px;text-align:center;white-space:nowrap;transform:scaleX(0.62);transform-origin:0 50%;text-align:left;">m</span><span style="display:inline-block;width:9.6px;text-align:center;white-space:nowrap;transform:scaleX(0.96);transform-origin:0 50%;text-align:left;">1</span><span style="display:inline-block;width:9.6px;text-align:center;white-space:nowrap;transform:scaleX(0.96);transform-origin:0 50%;text-align:left;">9</span><span style="display:inline-block;width:9.6px;text-align:center;white-space:nowrap;transform:scaleX(0.96);transform-origin:0 50%;text-align:left;">0</span><span style="display:inline-block;width:9.6px;text-align:center;white-space:nowrap;transform:scaleX(0.96);transform-origin:0 50%;text-align:left;">9</span></div>
<div class="t sr" style="left:690px;width:0;text-align:center;display:flex;justify-content:center;top:437px;font-size:19px;color:#2a9a2a;">空</div>
<div class="t sr" style="right:1158px;top:436px;font-size:20px;color:#111;"><span style="display:inline-block;width:9.6px;text-align:center;white-space:nowrap;transform:scaleX(0.96);transform-origin:0 50%;text-align:left;">1</span></div>
<div class="t sr" style="right:1103px;top:436px;font-size:20px;color:#111;"><span style="display:inline-block;width:9.6px;text-align:center;white-space:nowrap;transform:scaleX(0.96);transform-origin:0 50%;text-align:left;">1</span></div>
<div class="t sr" style="right:1047px;top:436px;font-size:20px;color:#111;"><span style="display:inline-block;width:9.6px;text-align:center;white-space:nowrap;transform:scaleX(0.96);transform-origin:0 50%;text-align:left;">0</span></div>
<div class="t sr" style="right:972px;top:436px;font-size:20px;color:#111;"><span style="display:inline-block;width:9.6px;text-align:center;white-space:nowrap;transform:scaleX(0.96);transform-origin:0 50%;text-align:left;">0</span></div>
<div class="t sr" style="right:883px;top:436px;font-size:20px;color:#111;"><span style="display:inline-block;width:9.6px;text-align:center;white-space:nowrap;transform:scaleX(0.96);transform-origin:0 50%;text-align:left;">2</span><span style="display:inline-block;width:9.6px;text-align:center;white-space:nowrap;transform:scaleX(0.96);transform-origin:0 50%;text-align:left;">7</span><span style="display:inline-block;width:9.6px;text-align:center;white-space:nowrap;transform:scaleX(0.96);transform-origin:0 50%;text-align:left;">7</span><span style="display:inline-block;width:9.6px;text-align:center;white-space:nowrap;transform:scaleX(0.96);transform-origin:0 50%;text-align:left;">6</span></div>
<div class="t sr" style="right:762px;top:436px;font-size:20px;color:#1a9a1a;"><span style="display:inline-block;width:9.6px;text-align:center;white-space:nowrap;transform:scaleX(0.96);transform-origin:0 50%;text-align:left;">-</span><span style="display:inline-block;width:9.6px;text-align:center;white-space:nowrap;transform:scaleX(0.96);transform-origin:0 50%;text-align:left;">8</span><span style="display:inline-block;width:9.6px;text-align:center;white-space:nowrap;transform:scaleX(0.96);transform-origin:0 50%;text-align:left;">4</span></div>
<div class="t sr" style="right:649px;top:436px;font-size:20px;color:#1a9a1a;"><span style="display:inline-block;width:9.6px;text-align:center;white-space:nowrap;transform:scaleX(0.96);transform-origin:0 50%;text-align:left;">-</span><span style="display:inline-block;width:9.6px;text-align:center;white-space:nowrap;transform:scaleX(0.96);transform-origin:0 50%;text-align:left;">8</span><span style="display:inline-block;width:9.6px;text-align:center;white-space:nowrap;transform:scaleX(0.96);transform-origin:0 50%;text-align:left;">4</span><span style="display:inline-block;width:9.6px;text-align:center;white-space:nowrap;transform:scaleX(0.96);transform-origin:0 50%;text-align:left;">0</span></div>
<div class="t sr" style="right:536px;top:436px;font-size:20px;color:#111;"><span style="display:inline-block;width:9.6px;text-align:center;white-space:nowrap;transform:scaleX(0.96);transform-origin:0 50%;text-align:left;">-</span><span style="display:inline-block;width:9.6px;text-align:center;white-space:nowrap;transform:scaleX(0.96);transform-origin:0 50%;text-align:left;">1</span><span style="display:inline-block;width:9.6px;text-align:center;white-space:nowrap;transform:scaleX(0.96);transform-origin:0 50%;text-align:left;">9</span><span style="display:inline-block;width:9.6px;text-align:center;white-space:nowrap;transform:scaleX(0.96);transform-origin:0 50%;text-align:left;">.</span><span style="display:inline-block;width:9.6px;text-align:center;white-space:nowrap;transform:scaleX(0.96);transform-origin:0 50%;text-align:left;">1</span><span style="display:inline-block;width:9.6px;text-align:center;white-space:nowrap;transform:scaleX(0.96);transform-origin:0 50%;text-align:left;">3</span><span style="display:inline-block;width:9.6px;text-align:center;white-space:nowrap;transform:scaleX(0.58);transform-origin:0 50%;text-align:left;">%</span></div>
<div class="t sr" style="right:374px;top:436px;font-size:20px;color:#111;"><span style="display:inline-block;width:9.6px;text-align:center;white-space:nowrap;transform:scaleX(0.96);transform-origin:0 50%;text-align:left;">2</span><span style="display:inline-block;width:9.6px;text-align:center;white-space:nowrap;transform:scaleX(0.96);transform-origin:0 50%;text-align:left;">8</span><span style="display:inline-block;width:9.6px;text-align:center;white-space:nowrap;transform:scaleX(0.96);transform-origin:0 50%;text-align:left;">,</span><span style="display:inline-block;width:9.6px;text-align:center;white-space:nowrap;transform:scaleX(0.96);transform-origin:0 50%;text-align:left;">6</span><span style="display:inline-block;width:9.6px;text-align:center;white-space:nowrap;transform:scaleX(0.96);transform-origin:0 50%;text-align:left;">0</span><span style="display:inline-block;width:9.6px;text-align:center;white-space:nowrap;transform:scaleX(0.96);transform-origin:0 50%;text-align:left;">0</span></div>
<div class="t sr" style="right:261px;top:436px;font-size:20px;color:#111;"><span style="display:inline-block;width:9.6px;text-align:center;white-space:nowrap;transform:scaleX(0.96);transform-origin:0 50%;text-align:left;">4</span><span style="display:inline-block;width:9.6px;text-align:center;white-space:nowrap;transform:scaleX(0.96);transform-origin:0 50%;text-align:left;">,</span><span style="display:inline-block;width:9.6px;text-align:center;white-space:nowrap;transform:scaleX(0.96);transform-origin:0 50%;text-align:left;">3</span><span style="display:inline-block;width:9.6px;text-align:center;white-space:nowrap;transform:scaleX(0.96);transform-origin:0 50%;text-align:left;">9</span><span style="display:inline-block;width:9.6px;text-align:center;white-space:nowrap;transform:scaleX(0.96);transform-origin:0 50%;text-align:left;">2</span></div>
<div class="t sr" style="left:519px;top:465px;font-size:19px;color:#222;">郑油</div>
<div class="t sr" style="left:586px;top:464px;font-size:20px;color:#111;"><span style="display:inline-block;width:9.6px;text-align:center;white-space:nowrap;transform:scaleX(0.66);transform-origin:0 50%;text-align:left;">O</span><span style="display:inline-block;width:9.6px;text-align:center;white-space:nowrap;">I</span><span style="display:inline-block;width:9.6px;text-align:center;white-space:nowrap;transform:scaleX(0.96);transform-origin:0 50%;text-align:left;">9</span><span style="display:inline-block;width:9.6px;text-align:center;white-space:nowrap;transform:scaleX(0.96);transform-origin:0 50%;text-align:left;">0</span><span style="display:inline-block;width:9.6px;text-align:center;white-space:nowrap;transform:scaleX(0.96);transform-origin:0 50%;text-align:left;">9</span></div>
<div class="t sr" style="left:662px;top:465px;font-size:19px;color:#d02040;">多</div>
<div class="t sr" style="right:1158px;top:464px;font-size:20px;color:#111;"><span style="display:inline-block;width:9.6px;text-align:center;white-space:nowrap;transform:scaleX(0.96);transform-origin:0 50%;text-align:left;">1</span></div>
<div class="t sr" style="right:1103px;top:464px;font-size:20px;color:#111;"><span style="display:inline-block;width:9.6px;text-align:center;white-space:nowrap;transform:scaleX(0.96);transform-origin:0 50%;text-align:left;">1</span></div>
<div class="t sr" style="right:1047px;top:464px;font-size:20px;color:#111;"><span style="display:inline-block;width:9.6px;text-align:center;white-space:nowrap;transform:scaleX(0.96);transform-origin:0 50%;text-align:left;">0</span></div>
<div class="t sr" style="right:972px;top:464px;font-size:20px;color:#111;"><span style="display:inline-block;width:9.6px;text-align:center;white-space:nowrap;transform:scaleX(0.96);transform-origin:0 50%;text-align:left;">0</span></div>
<div class="t sr" style="right:883px;top:464px;font-size:20px;color:#111;"><span style="display:inline-block;width:9.6px;text-align:center;white-space:nowrap;transform:scaleX(0.96);transform-origin:0 50%;text-align:left;">7</span><span style="display:inline-block;width:9.6px;text-align:center;white-space:nowrap;transform:scaleX(0.96);transform-origin:0 50%;text-align:left;">0</span><span style="display:inline-block;width:9.6px;text-align:center;white-space:nowrap;transform:scaleX(0.96);transform-origin:0 50%;text-align:left;">0</span><span style="display:inline-block;width:9.6px;text-align:center;white-space:nowrap;transform:scaleX(0.96);transform-origin:0 50%;text-align:left;">5</span></div>
<div class="t sr" style="right:762px;top:464px;font-size:20px;color:#d02020;"><span style="display:inline-block;width:9.6px;text-align:center;white-space:nowrap;transform:scaleX(0.96);transform-origin:0 50%;text-align:left;">2</span><span style="display:inline-block;width:9.6px;text-align:center;white-space:nowrap;transform:scaleX(0.96);transform-origin:0 50%;text-align:left;">9</span><span style="display:inline-block;width:9.6px;text-align:center;white-space:nowrap;transform:scaleX(0.96);transform-origin:0 50%;text-align:left;">3</span></div>
<div class="t sr" style="right:649px;top:464px;font-size:20px;color:#d02020;"><span style="display:inline-block;width:9.6px;text-align:center;white-space:nowrap;transform:scaleX(0.96);transform-origin:0 50%;text-align:left;">2</span><span style="display:inline-block;width:9.6px;text-align:center;white-space:nowrap;transform:scaleX(0.96);transform-origin:0 50%;text-align:left;">9</span><span style="display:inline-block;width:9.6px;text-align:center;white-space:nowrap;transform:scaleX(0.96);transform-origin:0 50%;text-align:left;">3</span><span style="display:inline-block;width:9.6px;text-align:center;white-space:nowrap;transform:scaleX(0.96);transform-origin:0 50%;text-align:left;">0</span></div>
<div class="t sr" style="right:536px;top:464px;font-size:20px;color:#111;"><span style="display:inline-block;width:9.6px;text-align:center;white-space:nowrap;transform:scaleX(0.96);transform-origin:0 50%;text-align:left;">2</span><span style="display:inline-block;width:9.6px;text-align:center;white-space:nowrap;transform:scaleX(0.96);transform-origin:0 50%;text-align:left;">6</span><span style="display:inline-block;width:9.6px;text-align:center;white-space:nowrap;transform:scaleX(0.96);transform-origin:0 50%;text-align:left;">.</span><span style="display:inline-block;width:9.6px;text-align:center;white-space:nowrap;transform:scaleX(0.96);transform-origin:0 50%;text-align:left;">8</span><span style="display:inline-block;width:9.6px;text-align:center;white-space:nowrap;transform:scaleX(0.96);transform-origin:0 50%;text-align:left;">2</span><span style="display:inline-block;width:9.6px;text-align:center;white-space:nowrap;transform:scaleX(0.58);transform-origin:0 50%;text-align:left;">%</span></div>
<div class="t sr" style="right:374px;top:464px;font-size:20px;color:#111;"><span style="display:inline-block;width:9.6px;text-align:center;white-space:nowrap;transform:scaleX(0.96);transform-origin:0 50%;text-align:left;">7</span><span style="display:inline-block;width:9.6px;text-align:center;white-space:nowrap;transform:scaleX(0.96);transform-origin:0 50%;text-align:left;">2</span><span style="display:inline-block;width:9.6px;text-align:center;white-space:nowrap;transform:scaleX(0.96);transform-origin:0 50%;text-align:left;">,</span><span style="display:inline-block;width:9.6px;text-align:center;white-space:nowrap;transform:scaleX(0.96);transform-origin:0 50%;text-align:left;">9</span><span style="display:inline-block;width:9.6px;text-align:center;white-space:nowrap;transform:scaleX(0.96);transform-origin:0 50%;text-align:left;">8</span><span style="display:inline-block;width:9.6px;text-align:center;white-space:nowrap;transform:scaleX(0.96);transform-origin:0 50%;text-align:left;">0</span></div>
<div class="t sr" style="right:261px;top:464px;font-size:20px;color:#111;"><span style="display:inline-block;width:9.6px;text-align:center;white-space:nowrap;transform:scaleX(0.96);transform-origin:0 50%;text-align:left;">1</span><span style="display:inline-block;width:9.6px;text-align:center;white-space:nowrap;transform:scaleX(0.96);transform-origin:0 50%;text-align:left;">0</span><span style="display:inline-block;width:9.6px;text-align:center;white-space:nowrap;transform:scaleX(0.96);transform-origin:0 50%;text-align:left;">,</span><span style="display:inline-block;width:9.6px;text-align:center;white-space:nowrap;transform:scaleX(0.96);transform-origin:0 50%;text-align:left;">9</span><span style="display:inline-block;width:9.6px;text-align:center;white-space:nowrap;transform:scaleX(0.96);transform-origin:0 50%;text-align:left;">2</span><span style="display:inline-block;width:9.6px;text-align:center;white-space:nowrap;transform:scaleX(0.96);transform-origin:0 50%;text-align:left;">5</span></div>
<div class="t sr" style="left:519px;top:493px;font-size:19px;color:#222;">棕榈</div>
<div class="t sr" style="left:586px;top:492px;font-size:20px;color:#111;"><span style="display:inline-block;width:9.6px;text-align:center;white-space:nowrap;transform:scaleX(0.96);transform-origin:0 50%;text-align:left;">p</span><span style="display:inline-block;width:9.6px;text-align:center;white-space:nowrap;transform:scaleX(0.96);transform-origin:0 50%;text-align:left;">1</span><span style="display:inline-block;width:9.6px;text-align:center;white-space:nowrap;transform:scaleX(0.96);transform-origin:0 50%;text-align:left;">9</span><span style="display:inline-block;width:9.6px;text-align:center;white-space:nowrap;transform:scaleX(0.96);transform-origin:0 50%;text-align:left;">0</span><span style="display:inline-block;width:9.6px;text-align:center;white-space:nowrap;transform:scaleX(0.96);transform-origin:0 50%;text-align:left;">9</span></div>
<div class="t sr" style="left:662px;top:493px;font-size:19px;color:#d02040;">多</div>
<div class="t sr" style="right:1158px;top:492px;font-size:20px;color:#111;"><span style="display:inline-block;width:9.6px;text-align:center;white-space:nowrap;transform:scaleX(0.96);transform-origin:0 50%;text-align:left;">1</span></div>
<div class="t sr" style="right:1103px;top:492px;font-size:20px;color:#111;"><span style="display:inline-block;width:9.6px;text-align:center;white-space:nowrap;transform:scaleX(0.96);transform-origin:0 50%;text-align:left;">1</span></div>
<div class="t sr" style="right:1047px;top:492px;font-size:20px;color:#111;"><span style="display:inline-block;width:9.6px;text-align:center;white-space:nowrap;transform:scaleX(0.96);transform-origin:0 50%;text-align:left;">0</span></div>
<div class="t sr" style="right:972px;top:492px;font-size:20px;color:#111;"><span style="display:inline-block;width:9.6px;text-align:center;white-space:nowrap;transform:scaleX(0.96);transform-origin:0 50%;text-align:left;">0</span></div>
<div class="t sr" style="right:883px;top:492px;font-size:20px;color:#111;"><span style="display:inline-block;width:9.6px;text-align:center;white-space:nowrap;transform:scaleX(0.96);transform-origin:0 50%;text-align:left;">4</span><span style="display:inline-block;width:9.6px;text-align:center;white-space:nowrap;transform:scaleX(0.96);transform-origin:0 50%;text-align:left;">3</span><span style="display:inline-block;width:9.6px;text-align:center;white-space:nowrap;transform:scaleX(0.96);transform-origin:0 50%;text-align:left;">7</span><span style="display:inline-block;width:9.6px;text-align:center;white-space:nowrap;transform:scaleX(0.96);transform-origin:0 50%;text-align:left;">4</span></div>
<div class="t sr" style="right:762px;top:492px;font-size:20px;color:#d02020;"><span style="display:inline-block;width:9.6px;text-align:center;white-space:nowrap;transform:scaleX(0.96);transform-origin:0 50%;text-align:left;">3</span><span style="display:inline-block;width:9.6px;text-align:center;white-space:nowrap;transform:scaleX(0.96);transform-origin:0 50%;text-align:left;">4</span><span style="display:inline-block;width:9.6px;text-align:center;white-space:nowrap;transform:scaleX(0.96);transform-origin:0 50%;text-align:left;">6</span></div>
<div class="t sr" style="right:649px;top:492px;font-size:20px;color:#d02020;"><span style="display:inline-block;width:9.6px;text-align:center;white-space:nowrap;transform:scaleX(0.96);transform-origin:0 50%;text-align:left;">3</span><span style="display:inline-block;width:9.6px;text-align:center;white-space:nowrap;transform:scaleX(0.96);transform-origin:0 50%;text-align:left;">4</span><span style="display:inline-block;width:9.6px;text-align:center;white-space:nowrap;transform:scaleX(0.96);transform-origin:0 50%;text-align:left;">6</span><span style="display:inline-block;width:9.6px;text-align:center;white-space:nowrap;transform:scaleX(0.96);transform-origin:0 50%;text-align:left;">0</span></div>
<div class="t sr" style="right:536px;top:492px;font-size:20px;color:#111;"><span style="display:inline-block;width:9.6px;text-align:center;white-space:nowrap;transform:scaleX(0.96);transform-origin:0 50%;text-align:left;">4</span><span style="display:inline-block;width:9.6px;text-align:center;white-space:nowrap;transform:scaleX(0.96);transform-origin:0 50%;text-align:left;">8</span><span style="display:inline-block;width:9.6px;text-align:center;white-space:nowrap;transform:scaleX(0.96);transform-origin:0 50%;text-align:left;">.</span><span style="display:inline-block;width:9.6px;text-align:center;white-space:nowrap;transform:scaleX(0.96);transform-origin:0 50%;text-align:left;">9</span><span style="display:inline-block;width:9.6px;text-align:center;white-space:nowrap;transform:scaleX(0.96);transform-origin:0 50%;text-align:left;">7</span><span style="display:inline-block;width:9.6px;text-align:center;white-space:nowrap;transform:scaleX(0.58);transform-origin:0 50%;text-align:left;">%</span></div>
<div class="t sr" style="right:374px;top:492px;font-size:20px;color:#111;"><span style="display:inline-block;width:9.6px;text-align:center;white-space:nowrap;transform:scaleX(0.96);transform-origin:0 50%;text-align:left;">4</span><span style="display:inline-block;width:9.6px;text-align:center;white-space:nowrap;transform:scaleX(0.96);transform-origin:0 50%;text-align:left;">7</span><span style="display:inline-block;width:9.6px;text-align:center;white-space:nowrap;transform:scaleX(0.96);transform-origin:0 50%;text-align:left;">,</span><span style="display:inline-block;width:9.6px;text-align:center;white-space:nowrap;transform:scaleX(0.96);transform-origin:0 50%;text-align:left;">2</span><span style="display:inline-block;width:9.6px;text-align:center;white-space:nowrap;transform:scaleX(0.96);transform-origin:0 50%;text-align:left;">0</span><span style="display:inline-block;width:9.6px;text-align:center;white-space:nowrap;transform:scaleX(0.96);transform-origin:0 50%;text-align:left;">0</span></div>
<div class="t sr" style="right:261px;top:492px;font-size:20px;color:#111;"><span style="display:inline-block;width:9.6px;text-align:center;white-space:nowrap;transform:scaleX(0.96);transform-origin:0 50%;text-align:left;">7</span><span style="display:inline-block;width:9.6px;text-align:center;white-space:nowrap;transform:scaleX(0.96);transform-origin:0 50%;text-align:left;">,</span><span style="display:inline-block;width:9.6px;text-align:center;white-space:nowrap;transform:scaleX(0.96);transform-origin:0 50%;text-align:left;">0</span><span style="display:inline-block;width:9.6px;text-align:center;white-space:nowrap;transform:scaleX(0.96);transform-origin:0 50%;text-align:left;">6</span><span style="display:inline-block;width:9.6px;text-align:center;white-space:nowrap;transform:scaleX(0.96);transform-origin:0 50%;text-align:left;">5</span></div>
<div class="t sr" style="left:519px;top:521px;font-size:19px;color:#222;"><span style="display:inline-block;width:9.6px;text-align:center;white-space:nowrap;transform:scaleX(0.96);transform-origin:0 50%;text-align:left;">4</span>个</div>
<div class="t sr" style="right:1158px;top:520px;font-size:20px;color:#111;"><span style="display:inline-block;width:9.6px;text-align:center;white-space:nowrap;transform:scaleX(0.96);transform-origin:0 50%;text-align:left;">4</span></div>
<div class="t sr" style="right:649px;top:520px;font-size:20px;color:#111;"><span style="display:inline-block;width:9.6px;text-align:center;white-space:nowrap;transform:scaleX(0.96);transform-origin:0 50%;text-align:left;">6</span><span style="display:inline-block;width:9.6px;text-align:center;white-space:nowrap;transform:scaleX(0.96);transform-origin:0 50%;text-align:left;">7</span><span style="display:inline-block;width:9.6px;text-align:center;white-space:nowrap;transform:scaleX(0.96);transform-origin:0 50%;text-align:left;">2</span><span style="display:inline-block;width:9.6px;text-align:center;white-space:nowrap;transform:scaleX(0.96);transform-origin:0 50%;text-align:left;">0</span></div>
<div class="t sr" style="right:374px;top:520px;font-size:20px;color:#111;"><span style="display:inline-block;width:9.6px;text-align:center;white-space:nowrap;transform:scaleX(0.96);transform-origin:0 50%;text-align:left;">1</span><span style="display:inline-block;width:9.6px;text-align:center;white-space:nowrap;transform:scaleX(0.96);transform-origin:0 50%;text-align:left;">7</span><span style="display:inline-block;width:9.6px;text-align:center;white-space:nowrap;transform:scaleX(0.96);transform-origin:0 50%;text-align:left;">1</span><span style="display:inline-block;width:9.6px;text-align:center;white-space:nowrap;transform:scaleX(0.96);transform-origin:0 50%;text-align:left;">,</span><span style="display:inline-block;width:9.6px;text-align:center;white-space:nowrap;transform:scaleX(0.96);transform-origin:0 50%;text-align:left;">2</span><span style="display:inline-block;width:9.6px;text-align:center;white-space:nowrap;transform:scaleX(0.96);transform-origin:0 50%;text-align:left;">8</span><span style="display:inline-block;width:9.6px;text-align:center;white-space:nowrap;transform:scaleX(0.96);transform-origin:0 50%;text-align:left;">0</span></div>
<div class="t sr" style="right:261px;top:520px;font-size:20px;color:#111;"><span style="display:inline-block;width:9.6px;text-align:center;white-space:nowrap;transform:scaleX(0.96);transform-origin:0 50%;text-align:left;">2</span><span style="display:inline-block;width:9.6px;text-align:center;white-space:nowrap;transform:scaleX(0.96);transform-origin:0 50%;text-align:left;">5</span><span style="display:inline-block;width:9.6px;text-align:center;white-space:nowrap;transform:scaleX(0.96);transform-origin:0 50%;text-align:left;">,</span><span style="display:inline-block;width:9.6px;text-align:center;white-space:nowrap;transform:scaleX(0.96);transform-origin:0 50%;text-align:left;">8</span><span style="display:inline-block;width:9.6px;text-align:center;white-space:nowrap;transform:scaleX(0.96);transform-origin:0 50%;text-align:left;">0</span><span style="display:inline-block;width:9.6px;text-align:center;white-space:nowrap;transform:scaleX(0.96);transform-origin:0 50%;text-align:left;">2</span></div>
<!-- panel 2 -->
<div class="a" style="left:0px;top:570px;width:1693px;height:398px;background:#d5d9e6;"></div>
<div class="a" style="left:0px;top:615px;width:1688px;height:341px;background:#f0f0f0;"></div>
<div class="a" style="left:0px;top:615px;width:1688px;height:7px;background:#f4f4f4;"></div>
<div class="a" style="left:0px;top:960px;width:1693px;height:2px;background:#e4e7ee;"></div>
<div class="a" style="left:0px;top:622px;width:445px;height:258px;background:transparent;border-top:1px solid #dadada;border-right:1px solid #dadada;border-bottom:1px solid #dadada;"></div>
<div class="t" style="left:-9px;top:584px;font-size:19px;color:#333;letter-spacing:2.3px">权益</div>
<div class="t" style="left:33px;top:584px;font-size:19px;color:#333;">：</div>
<div class="t" style="left:60px;top:582px;font-size:21px;color:#111;">1,099,551</div>
<div class="t" style="left:148px;top:584px;font-size:19px;color:#333;">，</div>
<div class="t" style="left:178px;top:584px;font-size:19px;color:#333;letter-spacing:2.3px">可用资金</div>
<div class="t" style="left:261px;top:584px;font-size:19px;color:#333;">：</div>
<div class="t" style="left:287px;top:582px;font-size:21px;color:#111;">369,151</div>
<div class="t" style="left:359px;top:584px;font-size:19px;color:#333;">，</div>
<div class="t" style="left:387px;top:584px;font-size:19px;color:#333;letter-spacing:2.3px">资金使用率</div>
<div class="t" style="left:490px;top:584px;font-size:19px;color:#333;">：</div>
<div class="t" style="left:519px;top:582px;font-size:21px;color:#111;">66.43%</div>
<svg style="left:0;top:0" width="1920" height="1031"><g fill="#2a2e38"><circle cx="1624.60" cy="594.00" r="2.1"/><circle cx="1621.79" cy="600.79" r="2.1"/><circle cx="1615.00" cy="603.60" r="2.1"/><circle cx="1608.21" cy="600.79" r="2.1"/><circle cx="1605.40" cy="594.00" r="2.1"/><circle cx="1608.21" cy="587.21" r="2.1"/><circle cx="1615.00" cy="584.40" r="2.1"/><circle cx="1621.79" cy="587.21" r="2.1"/></g><circle cx="1615" cy="594" r="8" fill="none" stroke="#2a2e38" stroke-width="3"/></svg>
<svg style="left:0;top:0" width="1920" height="1031"><path d="M1657 588L1666 597L1675 588" fill="none" stroke="#2a2e38" stroke-width="2.2"/><path d="M1655.5 602H1676.5" stroke="#2a2e38" stroke-width="2.6"/></svg>
<div class="t" style="left:104px;top:637px;font-size:16px;color:#111;">手数</div>
<svg style="left:0;top:0" width="1920" height="1031"><path d="M146.5 647V642H163V652H150" fill="none" stroke="#222" stroke-width="1.8"/><path d="M152 648L147 652L152 656Z" fill="#222"/></svg>
<div class="t" style="left:231px;top:637px;font-size:16px;color:#111;">价格...</div>
<div class="a" style="left:0px;top:664px;width:74px;height:35px;background:#f0f0f0;border:1px solid #7a7a7a;border-left:none;"></div>
<div class="t b" style="left:-1px;top:669px;font-size:19px;color:#111;">IU9</div>
<svg style="left:0;top:0" width="1920" height="1031"><circle cx="86" cy="679.5" r="5.8" fill="none" stroke="#444" stroke-width="2"/><path d="M90 684L94.5 688.5" stroke="#333" stroke-width="2.8"/></svg>
<div class="a" style="left:104px;top:664px;width:90px;height:35px;background:#fff;border:1px solid #7a7a7a;"></div>
<div class="t b" style="right:1756px;top:669px;font-size:19px;color:#111;">50</div>
<div class="a" style="left:168px;top:666px;width:23px;height:31px;background:#e6e6e6;border:1px solid #c8c8c8;"></div><div class="a" style="left:169px;top:681.0px;width:21px;height:1px;background:#b8b8b8;"></div><svg style="left:0;top:0" width="1920" height="1031"><path d="M179.5 670.5L184.5 676.5H174.5Z" fill="#111"/><path d="M179.5 692.5L184.5 686.5H174.5Z" fill="#111"/></svg>
<div class="a" style="left:224px;top:664px;width:116px;height:35px;background:#eeeeee;border:1px solid #7a7a7a;"></div>
<div class="t" style="left:229px;top:668px;font-size:17px;color:#333;">对手价</div>
<div class="a" style="left:314px;top:666px;width:23px;height:31px;background:#e6e6e6;border:1px solid #c8c8c8;"></div><div class="a" style="left:315px;top:681.0px;width:21px;height:1px;background:#b8b8b8;"></div><svg style="left:0;top:0" width="1920" height="1031"><path d="M325.5 670.5L330.5 676.5H320.5Z" fill="#111"/><path d="M325.5 692.5L330.5 686.5H320.5Z" fill="#111"/></svg>
<div class="bb" style="left:-6px;top:722px;width:169px;height:89px"></div>
<div class="a" style="left:0px;top:757px;width:158px;height:1px;background:#6a7888;"></div>
<div class="t b" style="left:73px;width:0;text-align:center;display:flex;justify-content:center;top:730px;font-size:20px;color:#e00000;">27037</div>
<svg style="left:0;top:0" width="1920" height="1031"><path d="M138 734L144.5 745.5H131.5Z" fill="#e00000"/></svg>
<div class="t sr" style="left:73px;width:0;text-align:center;display:flex;justify-content:center;top:772px;font-size:28px;color:#e00000;">买入</div>
<div class="bb" style="left:178px;top:722px;width:179px;height:89px"></div>
<div class="a" style="left:183px;top:757px;width:169px;height:1px;background:#6a7888;"></div>
<div class="t b" style="left:267px;width:0;text-align:center;display:flex;justify-content:center;top:730px;font-size:20px;color:#008a00;">27031</div>
<div class="t sr" style="left:267px;width:0;text-align:center;display:flex;justify-content:center;top:772px;font-size:28px;color:#008a00;">平仓</div>
<div class="t" style="left:74px;width:0;text-align:center;display:flex;justify-content:center;top:819px;font-size:17px;color:#111;">&lt;= 25</div>
<div class="t" style="left:267px;width:0;text-align:center;display:flex;justify-content:center;top:819px;font-size:17px;color:#111;">&lt;= 125</div>
<div class="a" style="left:18px;top:840px;width:94px;height:27px;background:#e1e1e1;border:1px solid #adadad;"></div>
<div class="t" style="left:65px;width:0;text-align:center;display:flex;justify-content:center;top:847px;font-size:17px;color:#111;">撤单</div>
<div class="a" style="left:125px;top:840px;width:94px;height:27px;background:#e1e1e1;border:1px solid #adadad;"></div>
<div class="t" style="left:172px;width:0;text-align:center;display:flex;justify-content:center;top:847px;font-size:17px;color:#111;">对价跟</div>
<div class="a" style="left:232px;top:840px;width:94px;height:27px;background:#e1e1e1;border:1px solid #adadad;"></div>
<div class="t" style="left:279px;width:0;text-align:center;display:flex;justify-content:center;top:847px;font-size:17px;color:#111;">排队跟</div>
<div class="a" style="left:339px;top:840px;width:94px;height:27px;background:#e1e1e1;border:1px solid #adadad;"></div>
<div class="t" style="left:386px;width:0;text-align:center;display:flex;justify-content:center;top:847px;font-size:17px;color:#111;">连续追</div>
<div class="t" style="left:0px;top:896px;font-size:16px;color:#111;">09</div>
<div class="t" style="left:94px;top:896px;font-size:16px;color:#111;">50手多仓</div>
<div class="t" style="left:163px;top:895px;font-size:17px;color:#e02020;letter-spacing:0.6px">+777500</div>
<div class="t" style="left:0px;top:927px;font-size:17px;color:#2020b0;margin-left:-5px">开仓</div>
<div class="t" style="left:63px;top:927px;font-size:17px;color:#2020b0;">画线下单</div>
<div class="t" style="left:161px;top:927px;font-size:17px;color:#2020b0;">云条件单</div>
<svg style="left:0;top:0" width="1920" height="1031"><path d="M418 929L425 935L418 941" fill="none" stroke="#333" stroke-width="1.8"/><path d="M430 928V942" stroke="#333" stroke-width="2"/></svg>
<div class="a" style="left:454px;top:622px;width:66px;height:26px;background:#fbfbfb;"></div>
<div class="t sr" style="left:487px;width:0;text-align:center;display:flex;justify-content:center;top:626px;font-size:17px;color:#333;">持仓</div>
<div class="a" style="left:520px;top:624px;width:66px;height:24px;background:#e8e8e8;border-left:1px solid #d4d4d4;"></div>
<div class="t sr" style="left:553px;width:0;text-align:center;display:flex;justify-content:center;top:626px;font-size:17px;color:#333;">委托</div>
<div class="a" style="left:586px;top:624px;width:66px;height:24px;background:#e8e8e8;border-left:1px solid #d4d4d4;"></div>
<div class="t sr" style="left:619px;width:0;text-align:center;display:flex;justify-content:center;top:626px;font-size:17px;color:#333;">成交</div>
<div class="a" style="left:652px;top:624px;width:66px;height:24px;background:#e8e8e8;border-left:1px solid #d4d4d4;"></div>
<div class="t sr" style="left:685px;width:0;text-align:center;display:flex;justify-content:center;top:626px;font-size:17px;color:#333;">预备单</div>
<div class="a" style="left:718px;top:624px;width:66px;height:24px;background:#e8e8e8;border-left:1px solid #d4d4d4;"></div>
<div class="t sr" style="left:751px;width:0;text-align:center;display:flex;justify-content:center;top:626px;font-size:17px;color:#333;">条件单</div>
<div class="a" style="left:784px;top:624px;width:66px;height:24px;background:#e8e8e8;border-left:1px solid #d4d4d4;"></div>
<div class="t sr" style="left:817px;width:0;text-align:center;display:flex;justify-content:center;top:626px;font-size:17px;color:#333;">损盈单</div>
<div class="a" style="left:850px;top:624px;width:66px;height:24px;background:#e8e8e8;border-left:1px solid #d4d4d4;"></div>
<div class="t sr" style="left:883px;width:0;text-align:center;display:flex;justify-content:center;top:626px;font-size:17px;color:#333;">资金</div>
<div class="a" style="left:916px;top:624px;width:66px;height:24px;background:#e8e8e8;border-left:1px solid #d4d4d4;"></div>
<div class="t sr" style="left:949px;width:0;text-align:center;display:flex;justify-content:center;top:626px;font-size:17px;color:#333;">合约</div>
<div class="a" style="left:453px;top:647px;width:1230px;height:91px;background:#eef5fc;border:1px solid #828790;border-right:none;"></div>
<div class="a" style="left:454px;top:648px;width:1229px;height:26px;background:#f2f2f2;border-bottom:1px solid #a0a0a0;background:linear-gradient(#fafafa,#ececec);"></div>
<div class="a" style="left:454px;top:674px;width:1229px;height:28px;background:#9ccae6;"></div>
<div class="a" style="left:454px;top:731px;width:1229px;height:5px;background:#f0f0f0;"></div>
<div class="a" style="left:454px;top:731px;width:865px;height:5px;background:#c4c4c4;"></div>
<div class="a" style="left:544px;top:650px;width:1px;height:23px;background:#d0d0d0;"></div>
<div class="a" style="left:544px;top:674px;width:1px;height:57px;background:#f6f9fd;"></div>
<div class="a" style="left:634px;top:650px;width:1px;height:23px;background:#d0d0d0;"></div>
<div class="a" style="left:634px;top:674px;width:1px;height:57px;background:#f6f9fd;"></div>
<div class="a" style="left:694px;top:650px;width:1px;height:23px;background:#d0d0d0;"></div>
<div class="a" style="left:694px;top:674px;width:1px;height:57px;background:#f6f9fd;"></div>
<div class="a" style="left:785px;top:650px;width:1px;height:23px;background:#d0d0d0;"></div>
<div class="a" style="left:785px;top:674px;width:1px;height:57px;background:#f6f9fd;"></div>
<div class="a" style="left:875px;top:650px;width:1px;height:23px;background:#d0d0d0;"></div>
<div class="a" style="left:875px;top:674px;width:1px;height:57px;background:#f6f9fd;"></div>
<div class="a" style="left:965px;top:650px;width:1px;height:23px;background:#d0d0d0;"></div>
<div class="a" style="left:965px;top:674px;width:1px;height:57px;background:#f6f9fd;"></div>
<div class="a" style="left:1055px;top:650px;width:1px;height:23px;background:#d0d0d0;"></div>
<div class="a" style="left:1055px;top:674px;width:1px;height:57px;background:#f6f9fd;"></div>
<div class="a" style="left:1204px;top:650px;width:1px;height:23px;background:#d0d0d0;"></div>
<div class="a" style="left:1204px;top:674px;width:1px;height:57px;background:#f6f9fd;"></div>
<div class="a" style="left:1324px;top:650px;width:1px;height:23px;background:#d0d0d0;"></div>
<div class="a" style="left:1324px;top:674px;width:1px;height:57px;background:#f6f9fd;"></div>
<div class="a" style="left:1445px;top:650px;width:1px;height:23px;background:#d0d0d0;"></div>
<div class="a" style="left:1445px;top:674px;width:1px;height:57px;background:#f6f9fd;"></div>
<div class="a" style="left:1565px;top:650px;width:1px;height:23px;background:#d0d0d0;"></div>
<div class="a" style="left:1565px;top:674px;width:1px;height:57px;background:#f6f9fd;"></div>
<div class="a" style="left:1655px;top:650px;width:1px;height:23px;background:#d0d0d0;"></div>
<div class="a" style="left:1655px;top:674px;width:1px;height:57px;background:#f6f9fd;"></div>
<div class="t" style="left:462px;top:654px;font-size:18px;color:#111;">品种</div>
<div class="t" style="left:550px;top:654px;font-size:18px;color:#111;">合约号</div>
<div class="t" style="left:641px;top:654px;font-size:18px;color:#111;">多空</div>
<div class="t" style="right:1141px;top:654px;font-size:18px;color:#111;">总仓</div>
<div class="t" style="right:1051px;top:654px;font-size:18px;color:#111;">可用</div>
<div class="t" style="right:961px;top:654px;font-size:18px;color:#111;">今仓</div>
<div class="t" style="right:871px;top:654px;font-size:18px;color:#111;">今可用</div>
<div class="t" style="right:721px;top:654px;font-size:18px;color:#111;">开仓均价</div>
<div class="t" style="right:601px;top:654px;font-size:18px;color:#111;">盈利价差</div>
<div class="t" style="right:481px;top:654px;font-size:18px;color:#111;">逐笔浮盈</div>
<div class="t" style="right:361px;top:654px;font-size:18px;color:#111;">浮盈比例</div>
<div class="t" style="right:271px;top:654px;font-size:18px;color:#111;">币种</div>
<div class="t" style="left:1661px;top:654px;font-size:18px;color:#111;">损</div>
<svg style="left:0;top:0" width="1920" height="1031"><path d="M507 658L511 664H503Z" fill="#111"/></svg>
<div class="t sr" style="left:457px;top:676px;font-size:19px;color:#222;">恒指</div>
<div class="t sr" style="left:546px;top:675px;font-size:20px;color:#111;"><span style="display:inline-block;width:9.6px;text-align:center;white-space:nowrap;transform:scaleX(0.66);transform-origin:0 50%;text-align:left;">H</span><span style="display:inline-block;width:9.6px;text-align:center;white-space:nowrap;transform:scaleX(0.86);transform-origin:0 50%;text-align:left;">S</span><span style="display:inline-block;width:9.6px;text-align:center;white-space:nowrap;">I</span><span style="display:inline-block;width:9.6px;text-align:center;white-space:nowrap;transform:scaleX(0.66);transform-origin:0 50%;text-align:left;">U</span><span style="display:inline-block;width:9.6px;text-align:center;white-space:nowrap;transform:scaleX(0.96);transform-origin:0 50%;text-align:left;">9</span></div>
<div class="t sr" style="left:639px;top:676px;font-size:19px;color:#d02040;">多</div>
<div class="t sr" style="right:1137px;top:675px;font-size:20px;color:#111;"><span style="display:inline-block;width:9.6px;text-align:center;white-space:nowrap;transform:scaleX(0.96);transform-origin:0 50%;text-align:left;">5</span><span style="display:inline-block;width:9.6px;text-align:center;white-space:nowrap;transform:scaleX(0.96);transform-origin:0 50%;text-align:left;">0</span></div>
<div class="t sr" style="right:1047px;top:675px;font-size:20px;color:#111;"><span style="display:inline-block;width:9.6px;text-align:center;white-space:nowrap;transform:scaleX(0.96);transform-origin:0 50%;text-align:left;">5</span><span style="display:inline-block;width:9.6px;text-align:center;white-space:nowrap;transform:scaleX(0.96);transform-origin:0 50%;text-align:left;">0</span></div>
<div class="t sr" style="right:957px;top:675px;font-size:20px;color:#111;"><span style="display:inline-block;width:9.6px;text-align:center;white-space:nowrap;transform:scaleX(0.96);transform-origin:0 50%;text-align:left;">5</span><span style="display:inline-block;width:9.6px;text-align:center;white-space:nowrap;transform:scaleX(0.96);transform-origin:0 50%;text-align:left;">0</span></div>
<div class="t sr" style="right:867px;top:675px;font-size:20px;color:#111;"><span style="display:inline-block;width:9.6px;text-align:center;white-space:nowrap;transform:scaleX(0.96);transform-origin:0 50%;text-align:left;">5</span><span style="display:inline-block;width:9.6px;text-align:center;white-space:nowrap;transform:scaleX(0.96);transform-origin:0 50%;text-align:left;">0</span></div>
<div class="t sr" style="right:717px;top:675px;font-size:20px;color:#111;"><span style="display:inline-block;width:9.6px;text-align:center;white-space:nowrap;transform:scaleX(0.96);transform-origin:0 50%;text-align:left;">2</span><span style="display:inline-block;width:9.6px;text-align:center;white-space:nowrap;transform:scaleX(0.96);transform-origin:0 50%;text-align:left;">6</span><span style="display:inline-block;width:9.6px;text-align:center;white-space:nowrap;transform:scaleX(0.96);transform-origin:0 50%;text-align:left;">7</span><span style="display:inline-block;width:9.6px;text-align:center;white-space:nowrap;transform:scaleX(0.96);transform-origin:0 50%;text-align:left;">2</span><span style="display:inline-block;width:9.6px;text-align:center;white-space:nowrap;transform:scaleX(0.96);transform-origin:0 50%;text-align:left;">6</span><span style="display:inline-block;width:9.6px;text-align:center;white-space:nowrap;transform:scaleX(0.96);transform-origin:0 50%;text-align:left;">.</span><span style="display:inline-block;width:9.6px;text-align:center;white-space:nowrap;transform:scaleX(0.96);transform-origin:0 50%;text-align:left;">0</span></div>
<div class="t sr" style="right:597px;top:675px;font-size:20px;color:#d02040;"><span style="display:inline-block;width:9.6px;text-align:center;white-space:nowrap;transform:scaleX(0.96);transform-origin:0 50%;text-align:left;">3</span><span style="display:inline-block;width:9.6px;text-align:center;white-space:nowrap;transform:scaleX(0.96);transform-origin:0 50%;text-align:left;">1</span><span style="display:inline-block;width:9.6px;text-align:center;white-space:nowrap;transform:scaleX(0.96);transform-origin:0 50%;text-align:left;">1</span><span style="display:inline-block;width:9.6px;text-align:center;white-space:nowrap;transform:scaleX(0.96);transform-origin:0 50%;text-align:left;">.</span><span style="display:inline-block;width:9.6px;text-align:center;white-space:nowrap;transform:scaleX(0.96);transform-origin:0 50%;text-align:left;">0</span></div>
<div class="t sr" style="right:477px;top:675px;font-size:20px;color:#d02040;"><span style="display:inline-block;width:9.6px;text-align:center;white-space:nowrap;transform:scaleX(0.96);transform-origin:0 50%;text-align:left;">7</span><span style="display:inline-block;width:9.6px;text-align:center;white-space:nowrap;transform:scaleX(0.96);transform-origin:0 50%;text-align:left;">7</span><span style="display:inline-block;width:9.6px;text-align:center;white-space:nowrap;transform:scaleX(0.96);transform-origin:0 50%;text-align:left;">7</span><span style="display:inline-block;width:9.6px;text-align:center;white-space:nowrap;transform:scaleX(0.96);transform-origin:0 50%;text-align:left;">5</span><span style="display:inline-block;width:9.6px;text-align:center;white-space:nowrap;transform:scaleX(0.96);transform-origin:0 50%;text-align:left;">0</span><span style="display:inline-block;width:9.6px;text-align:center;white-space:nowrap;transform:scaleX(0.96);transform-origin:0 50%;text-align:left;">0</span></div>
<div class="t sr" style="right:357px;top:675px;font-size:20px;color:#111;"><span style="display:inline-block;width:9.6px;text-align:center;white-space:nowrap;transform:scaleX(0.96);transform-origin:0 50%;text-align:left;">1</span><span style="display:inline-block;width:9.6px;text-align:center;white-space:nowrap;transform:scaleX(0.96);transform-origin:0 50%;text-align:left;">3</span><span style="display:inline-block;width:9.6px;text-align:center;white-space:nowrap;transform:scaleX(0.96);transform-origin:0 50%;text-align:left;">.</span><span style="display:inline-block;width:9.6px;text-align:center;white-space:nowrap;transform:scaleX(0.96);transform-origin:0 50%;text-align:left;">5</span><span style="display:inline-block;width:9.6px;text-align:center;white-space:nowrap;transform:scaleX(0.96);transform-origin:0 50%;text-align:left;">7</span><span style="display:inline-block;width:9.6px;text-align:center;white-space:nowrap;transform:scaleX(0.58);transform-origin:0 50%;text-align:left;">%</span></div>
<div class="t sr" style="right:267px;top:675px;font-size:20px;color:#111;"><span style="display:inline-block;width:9.6px;text-align:center;white-space:nowrap;transform:scaleX(0.66);transform-origin:0 50%;text-align:left;">H</span><span style="display:inline-block;width:9.6px;text-align:center;white-space:nowrap;transform:scaleX(0.66);transform-origin:0 50%;text-align:left;">K</span><span style="display:inline-block;width:9.6px;text-align:center;white-space:nowrap;transform:scaleX(0.66);transform-origin:0 50%;text-align:left;">D</span></div>
<div class="a" style="left:1149px;top:744px;width:97px;height:30px;background:#e1e1e1;border:1px solid #adadad;"></div>
<div class="t" style="left:1197px;width:0;text-align:center;display:flex;justify-content:center;top:751px;font-size:17px;color:#111;">平33%</div>
<div class="a" style="left:1256px;top:744px;width:97px;height:30px;background:#e1e1e1;border:1px solid #adadad;"></div>
<div class="t" style="left:1304px;width:0;text-align:center;display:flex;justify-content:center;top:751px;font-size:17px;color:#111;">平50%</div>
<div class="a" style="left:1363px;top:744px;width:97px;height:30px;background:#e1e1e1;border:1px solid #adadad;"></div>
<div class="t" style="left:1411px;width:0;text-align:center;display:flex;justify-content:center;top:751px;font-size:17px;color:#111;">平100%</div>
<div class="a" style="left:1470px;top:744px;width:97px;height:30px;background:#e1e1e1;border:1px solid #adadad;"></div>
<div class="t" style="left:1518px;width:0;text-align:center;display:flex;justify-content:center;top:751px;font-size:17px;color:#111;">反手</div>
<div class="a" style="left:1577px;top:744px;width:97px;height:30px;background:#e1e1e1;border:1px solid #adadad;"></div>
<div class="t" style="left:1625px;width:0;text-align:center;display:flex;justify-content:center;top:751px;font-size:17px;color:#111;">损盈</div>
<div class="a" style="left:453px;top:781px;width:1229px;height:3px;background:#a8a8a8;"></div>
<div class="a" style="left:453px;top:789px;width:1230px;height:160px;background:#eef5fc;border:1px solid #828790;border-right:none;"></div>
<div class="a" style="left:454px;top:790px;width:961px;height:27px;background:#f2f2f2;border-bottom:1px solid #a0a0a0;background:linear-gradient(#fafafa,#ececec);"></div>
<div class="a" style="left:1415px;top:817px;width:267px;height:1px;background:#a0a0a0;"></div>
<div class="a" style="left:560px;top:792px;width:1px;height:24px;background:#d0d0d0;"></div>
<div class="a" style="left:560px;top:817px;width:1px;height:131px;background:#e4e9f0;"></div>
<div class="a" style="left:643px;top:792px;width:1px;height:24px;background:#d0d0d0;"></div>
<div class="a" style="left:643px;top:817px;width:1px;height:131px;background:#e4e9f0;"></div>
<div class="a" style="left:697px;top:792px;width:1px;height:24px;background:#d0d0d0;"></div>
<div class="a" style="left:697px;top:817px;width:1px;height:131px;background:#e4e9f0;"></div>
<div class="a" style="left:752px;top:792px;width:1px;height:24px;background:#d0d0d0;"></div>
<div class="a" style="left:752px;top:817px;width:1px;height:131px;background:#e4e9f0;"></div>
<div class="a" style="left:827px;top:792px;width:1px;height:24px;background:#d0d0d0;"></div>
<div class="a" style="left:827px;top:817px;width:1px;height:131px;background:#e4e9f0;"></div>
<div class="a" style="left:903px;top:792px;width:1px;height:24px;background:#d0d0d0;"></div>
<div class="a" style="left:903px;top:817px;width:1px;height:131px;background:#e4e9f0;"></div>
<div class="a" style="left:956px;top:792px;width:1px;height:24px;background:#d0d0d0;"></div>
<div class="a" style="left:956px;top:817px;width:1px;height:131px;background:#e4e9f0;"></div>
<div class="a" style="left:1030px;top:792px;width:1px;height:24px;background:#d0d0d0;"></div>
<div class="a" style="left:1030px;top:817px;width:1px;height:131px;background:#e4e9f0;"></div>
<div class="a" style="left:1084px;top:792px;width:1px;height:24px;background:#d0d0d0;"></div>
<div class="a" style="left:1084px;top:817px;width:1px;height:131px;background:#e4e9f0;"></div>
<div class="a" style="left:1160px;top:792px;width:1px;height:24px;background:#d0d0d0;"></div>
<div class="a" style="left:1160px;top:817px;width:1px;height:131px;background:#e4e9f0;"></div>
<div class="a" style="left:1295px;top:792px;width:1px;height:24px;background:#d0d0d0;"></div>
<div class="a" style="left:1295px;top:817px;width:1px;height:131px;background:#e4e9f0;"></div>
<div class="a" style="left:1414px;top:792px;width:1px;height:24px;background:#d0d0d0;"></div>
<div class="a" style="left:1414px;top:817px;width:1px;height:131px;background:#e4e9f0;"></div>
<div class="a" style="left:454px;top:844px;width:1229px;height:1px;background:#e4e9f0;"></div>
<div class="a" style="left:454px;top:872px;width:1229px;height:1px;background:#e4e9f0;"></div>
<div class="a" style="left:454px;top:900px;width:1229px;height:1px;background:#e4e9f0;"></div>
<div class="a" style="left:454px;top:928px;width:1229px;height:1px;background:#e4e9f0;"></div>
<div class="t" style="left:461px;top:796px;font-size:18px;color:#111;">时间</div>
<div class="t" style="left:566px;top:796px;font-size:18px;color:#111;">合约</div>
<div class="t" style="left:650px;top:796px;font-size:18px;color:#111;">状态</div>
<div class="t" style="left:704px;top:796px;font-size:18px;color:#111;">买卖</div>
<div class="t" style="right:1099px;top:796px;font-size:18px;color:#111;">委托价</div>
<div class="t" style="right:1024px;top:796px;font-size:18px;color:#111;">委托量</div>
<div class="t" style="right:971px;top:796px;font-size:18px;color:#111;">可撤</div>
<div class="t" style="right:895px;top:796px;font-size:18px;color:#111;">已成交</div>
<div class="t" style="left:1036px;top:796px;font-size:18px;color:#111;">投保</div>
<div class="t" style="left:1091px;top:796px;font-size:18px;color:#111;">预止损</div>
<div class="t" style="right:630px;top:796px;font-size:18px;color:#111;">合同号</div>
<div class="t" style="right:511px;top:796px;font-size:18px;color:#111;">主场号</div>
<svg style="left:0;top:0" width="1920" height="1031"><path d="M507 800L511 806H503Z" fill="#111"/></svg>

</body></html>
